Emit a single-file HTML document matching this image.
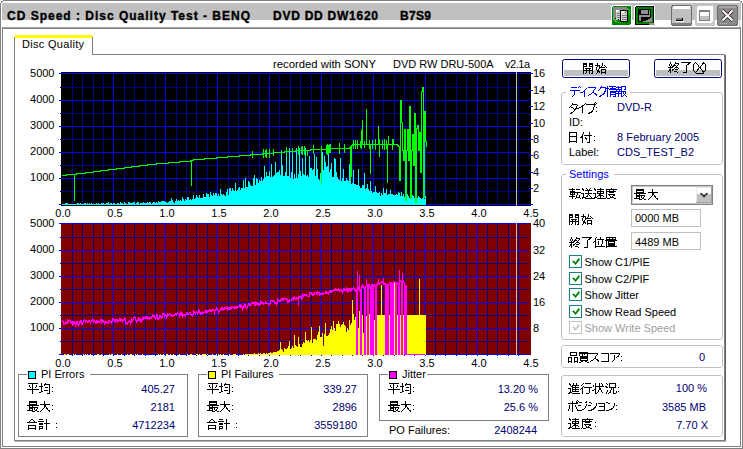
<!DOCTYPE html>
<html><head><meta charset="utf-8"><style>
html,body{margin:0;padding:0;background:#fff;overflow:hidden}
svg{display:block}
text{font-family:"Liberation Sans",sans-serif}
</style></head><body>
<svg width="743" height="449" viewBox="0 0 743 449" shape-rendering="crispEdges">
<rect x="0" y="0" width="743" height="449" fill="#fff"/>
<rect x="3" y="0" width="737" height="1" fill="#808080"/>
<rect x="0" y="3" width="1" height="446" fill="#808080"/>
<rect x="742" y="3" width="1" height="446" fill="#808080"/>
<rect x="0" y="448" width="743" height="1" fill="#808080"/>
<rect x="1" y="1" width="1" height="1" fill="#808080"/>
<rect x="2" y="1" width="1" height="1" fill="#808080"/>
<rect x="1" y="2" width="1" height="1" fill="#808080"/>
<rect x="740" y="1" width="1" height="1" fill="#808080"/>
<rect x="741" y="1" width="1" height="1" fill="#808080"/>
<rect x="741" y="2" width="1" height="1" fill="#808080"/>
<rect x="2" y="3" width="739" height="17" fill="#c0c0c0"/>
<rect x="2" y="27" width="739" height="1" fill="#a8a8a8"/>
<rect x="2" y="28" width="739" height="1" fill="#808080"/>
<rect x="2" y="27" width="1" height="420" fill="#808080"/>
<rect x="740" y="27" width="1" height="420" fill="#808080"/>
<rect x="2" y="446" width="739" height="1" fill="#808080"/>
<text x="7" y="20" fill="#000" font-size="12" text-anchor="start" font-weight="bold" textLength="243" lengthAdjust="spacing" stroke="#000" stroke-width="0.35">CD Speed : Disc Quality Test - BENQ</text>
<text x="273" y="20" fill="#000" font-size="12" text-anchor="start" font-weight="bold" textLength="105" lengthAdjust="spacing" stroke="#000" stroke-width="0.35">DVD DD DW1620</text>
<text x="400" y="20" fill="#000" font-size="12" text-anchor="start" font-weight="bold" textLength="31" lengthAdjust="spacing" stroke="#000" stroke-width="0.35">B7S9</text>
<rect x="611" y="5" width="21" height="21" fill="#fff" rx="3"/>
<rect x="612" y="6" width="19" height="19" fill="#008000" rx="2"/>
<rect x="613" y="7" width="14" height="3" fill="#888888"/>
<rect x="627" y="8" width="1" height="2" fill="#888888"/>
<rect x="628" y="9" width="1" height="1" fill="#888888"/>
<rect x="613" y="7" width="3" height="13" fill="#888888"/>
<rect x="614" y="20" width="2" height="1" fill="#888888"/>
<rect x="615" y="21" width="1" height="1" fill="#888888"/>
<rect x="616" y="10" width="5" height="10" fill="#c8c8c8"/>
<rect x="616" y="10" width="2" height="2" fill="#ffffff"/>
<rect x="617" y="13" width="3" height="1" fill="#808080"/>
<rect x="617" y="15" width="3" height="1" fill="#808080"/>
<rect x="617" y="17" width="3" height="1" fill="#808080"/>
<rect x="615" y="18" width="1" height="1" fill="#000"/>
<rect x="618" y="19" width="1" height="1" fill="#000"/>
<rect x="620" y="10" width="8" height="12" fill="#000"/>
<rect x="621" y="11" width="6" height="10" fill="#d0d0d0"/>
<rect x="621" y="11" width="3" height="2" fill="#f0f0f0"/>
<rect x="626" y="11" width="1" height="1" fill="#000"/>
<rect x="625" y="12" width="1" height="1" fill="#606060"/>
<rect x="622" y="15" width="5" height="1" fill="#808080"/>
<rect x="622" y="17" width="5" height="1" fill="#808080"/>
<rect x="622" y="19" width="5" height="1" fill="#808080"/>
<rect x="628" y="9" width="1" height="1" fill="#00ff00"/>
<rect x="629" y="10" width="1" height="1" fill="#00ff00"/>
<rect x="626" y="11" width="1" height="1" fill="#00ff00"/>
<rect x="629" y="12" width="1" height="1" fill="#00ff00"/>
<rect x="629" y="14" width="1" height="1" fill="#00ff00"/>
<rect x="613" y="12" width="1" height="1" fill="#00ff00"/>
<rect x="613" y="17" width="1" height="1" fill="#00ff00"/>
<rect x="614" y="19" width="1" height="1" fill="#00ff00"/>
<rect x="616" y="21" width="1" height="1" fill="#00ff00"/>
<rect x="618" y="22" width="1" height="1" fill="#00ff00"/>
<rect x="620" y="22" width="1" height="1" fill="#00ff00"/>
<rect x="634" y="5" width="21" height="21" fill="#fff" rx="3"/>
<rect x="635" y="6" width="19" height="19" fill="#000" rx="2"/>
<rect x="636" y="7" width="17" height="17" fill="#008000" rx="1"/>
<rect x="638" y="9" width="13" height="13" fill="#000"/>
<rect x="641" y="10" width="7" height="4" fill="#909090"/>
<rect x="639" y="15" width="11" height="2" fill="#909090"/>
<rect x="639" y="15" width="2" height="6" fill="#909090"/>
<rect x="649" y="11" width="1" height="6" fill="#909090"/>
<rect x="649" y="10" width="1" height="1" fill="#00ff00"/>
<path d="M642 22 L652 22 L652 17 L649 19 L647 20 Z" fill="#909090"/>
<rect x="649" y="23" width="5" height="2" fill="#909090"/>
<rect x="654" y="25" width="1" height="1" fill="#a0a0a0"/>
<rect x="671" y="5" width="21" height="21" fill="#707070" rx="3"/>
<rect x="672" y="6" width="19" height="19" fill="#c0c0c0" rx="2"/>
<rect x="673" y="6" width="17" height="3" fill="#ffffff"/>
<rect x="672" y="23" width="19" height="2" fill="#808080"/>
<rect x="676" y="18" width="7" height="3" fill="#000"/>
<rect x="676" y="18" width="6" height="2" fill="#808080"/>
<rect x="676" y="21" width="8" height="1" fill="#fff"/>
<rect x="695" y="5" width="20" height="21" fill="#c8c8c8" rx="3"/>
<rect x="697" y="6" width="16" height="17" fill="#fff" rx="2"/>
<rect x="699" y="10" width="11" height="11" fill="#808080"/>
<rect x="700" y="12" width="9" height="8" fill="#fff"/>
<rect x="700" y="16" width="9" height="4" fill="#c0c0c0"/>
<rect x="717" y="5" width="21" height="21" fill="#6c6c6c" rx="3"/>
<rect x="718" y="6" width="19" height="19" fill="#8a8a8a" rx="2"/>
<rect x="719" y="6" width="17" height="2" fill="#a8a8a8"/>
<rect x="720" y="23" width="1" height="1" fill="#b8b8b8"/>
<rect x="722" y="23" width="1" height="1" fill="#b8b8b8"/>
<rect x="724" y="23" width="1" height="1" fill="#b8b8b8"/>
<rect x="726" y="23" width="1" height="1" fill="#b8b8b8"/>
<path d="M722.5 10.5 L732.5 20.5 M732.5 10.5 L722.5 20.5" stroke="#000" stroke-width="3.2" shape-rendering="auto"/>
<path d="M722.5 10.5 L732.5 20.5 M732.5 10.5 L722.5 20.5" stroke="#fff" stroke-width="2.2" shape-rendering="auto"/>
<rect x="726" y="12" width="1" height="1" fill="#c00000"/>
<rect x="728" y="13" width="1" height="1" fill="#c00000"/>
<rect x="739" y="3" width="1" height="24" fill="#c8c8c8"/>
<rect x="14" y="37" width="1" height="404" fill="#808080"/>
<rect x="15" y="35" width="77" height="1" fill="#ffff00"/>
<rect x="15" y="36" width="78" height="1" fill="#ffff00"/>
<rect x="15" y="37" width="78" height="1" fill="#ffff00"/>
<rect x="92" y="37" width="1" height="18" fill="#808080"/>
<text x="22" y="48" fill="#000" font-size="11" text-anchor="start" font-weight="normal" textLength="62" lengthAdjust="spacing">Disc Quality</text>
<rect x="92" y="54" width="633" height="1" fill="#808080"/>
<rect x="724" y="54" width="1" height="388" fill="#808080"/>
<rect x="725" y="55" width="1" height="387" fill="#606060"/>
<rect x="14" y="440" width="712" height="1" fill="#808080"/>
<rect x="15" y="441" width="711" height="1" fill="#b0b0b0"/>
<rect x="61" y="72" width="470" height="134" fill="#000"/>
<rect x="72" y="73" width="1" height="133" fill="#000080"/>
<rect x="82" y="73" width="1" height="133" fill="#000080"/>
<rect x="93" y="73" width="1" height="133" fill="#000080"/>
<rect x="103" y="73" width="1" height="133" fill="#000080"/>
<rect x="124" y="73" width="1" height="133" fill="#000080"/>
<rect x="134" y="73" width="1" height="133" fill="#000080"/>
<rect x="145" y="73" width="1" height="133" fill="#000080"/>
<rect x="155" y="73" width="1" height="133" fill="#000080"/>
<rect x="176" y="73" width="1" height="133" fill="#000080"/>
<rect x="186" y="73" width="1" height="133" fill="#000080"/>
<rect x="196" y="73" width="1" height="133" fill="#000080"/>
<rect x="207" y="73" width="1" height="133" fill="#000080"/>
<rect x="228" y="73" width="1" height="133" fill="#000080"/>
<rect x="238" y="73" width="1" height="133" fill="#000080"/>
<rect x="248" y="73" width="1" height="133" fill="#000080"/>
<rect x="259" y="73" width="1" height="133" fill="#000080"/>
<rect x="279" y="73" width="1" height="133" fill="#000080"/>
<rect x="290" y="73" width="1" height="133" fill="#000080"/>
<rect x="300" y="73" width="1" height="133" fill="#000080"/>
<rect x="311" y="73" width="1" height="133" fill="#000080"/>
<rect x="331" y="73" width="1" height="133" fill="#000080"/>
<rect x="342" y="73" width="1" height="133" fill="#000080"/>
<rect x="352" y="73" width="1" height="133" fill="#000080"/>
<rect x="362" y="73" width="1" height="133" fill="#000080"/>
<rect x="383" y="73" width="1" height="133" fill="#000080"/>
<rect x="394" y="73" width="1" height="133" fill="#000080"/>
<rect x="404" y="73" width="1" height="133" fill="#000080"/>
<rect x="414" y="73" width="1" height="133" fill="#000080"/>
<rect x="435" y="73" width="1" height="133" fill="#000080"/>
<rect x="445" y="73" width="1" height="133" fill="#000080"/>
<rect x="456" y="73" width="1" height="133" fill="#000080"/>
<rect x="466" y="73" width="1" height="133" fill="#000080"/>
<rect x="487" y="73" width="1" height="133" fill="#000080"/>
<rect x="497" y="73" width="1" height="133" fill="#000080"/>
<rect x="508" y="73" width="1" height="133" fill="#000080"/>
<rect x="518" y="73" width="1" height="133" fill="#000080"/>
<rect x="60" y="191" width="469" height="1" fill="#000080"/>
<rect x="60" y="165" width="469" height="1" fill="#000080"/>
<rect x="60" y="139" width="469" height="1" fill="#000080"/>
<rect x="60" y="113" width="469" height="1" fill="#000080"/>
<rect x="60" y="87" width="469" height="1" fill="#000080"/>
<rect x="113" y="73" width="1" height="133" fill="#0000ff"/>
<rect x="165" y="73" width="1" height="133" fill="#0000ff"/>
<rect x="217" y="73" width="1" height="133" fill="#0000ff"/>
<rect x="269" y="73" width="1" height="133" fill="#0000ff"/>
<rect x="321" y="73" width="1" height="133" fill="#0000ff"/>
<rect x="373" y="73" width="1" height="133" fill="#0000ff"/>
<rect x="425" y="73" width="1" height="133" fill="#0000ff"/>
<rect x="477" y="73" width="1" height="133" fill="#0000ff"/>
<rect x="59" y="204" width="470" height="1" fill="#0000ff"/>
<rect x="59" y="178" width="470" height="1" fill="#0000ff"/>
<rect x="59" y="152" width="470" height="1" fill="#0000ff"/>
<rect x="59" y="126" width="470" height="1" fill="#0000ff"/>
<rect x="59" y="100" width="470" height="1" fill="#0000ff"/>
<rect x="59" y="73" width="470" height="1" fill="#0000ff"/>
<path fill="#00ffff" d="M62 204h1V205h-1zM63 204h1V205h-1zM64 204h1V205h-1zM65 203h1V205h-1zM66 203h1V205h-1zM67 203h1V205h-1zM68 204h1V205h-1zM69 204h1V205h-1zM70 204h1V205h-1zM71 204h1V205h-1zM72 204h1V205h-1zM73 204h1V205h-1zM74 204h1V205h-1zM75 204h1V205h-1zM76 204h1V205h-1zM77 203h1V205h-1zM78 203h1V205h-1zM79 204h1V205h-1zM80 203h1V205h-1zM81 204h1V205h-1zM82 204h1V205h-1zM83 204h1V205h-1zM84 203h1V205h-1zM85 203h1V205h-1zM86 204h1V205h-1zM87 203h1V205h-1zM88 204h1V205h-1zM89 203h1V205h-1zM90 204h1V205h-1zM91 203h1V205h-1zM92 204h1V205h-1zM93 204h1V205h-1zM94 204h1V205h-1zM95 204h1V205h-1zM96 203h1V205h-1zM97 204h1V205h-1zM98 203h1V205h-1zM99 204h1V205h-1zM100 204h1V205h-1zM101 203h1V205h-1zM102 203h1V205h-1zM103 203h1V205h-1zM104 204h1V205h-1zM105 204h1V205h-1zM106 203h1V205h-1zM107 203h1V205h-1zM108 202h1V205h-1zM109 204h1V205h-1zM110 203h1V205h-1zM111 203h1V205h-1zM112 204h1V205h-1zM113 203h1V205h-1zM114 203h1V205h-1zM115 204h1V205h-1zM116 204h1V205h-1zM117 203h1V205h-1zM118 203h1V205h-1zM119 204h1V205h-1zM120 202h1V205h-1zM121 203h1V205h-1zM122 203h1V205h-1zM123 204h1V205h-1zM124 202h1V205h-1zM125 203h1V205h-1zM126 204h1V205h-1zM127 204h1V205h-1zM128 202h1V205h-1zM129 202h1V205h-1zM130 203h1V205h-1zM131 203h1V205h-1zM132 203h1V205h-1zM133 202h1V205h-1zM134 202h1V205h-1zM135 204h1V205h-1zM136 203h1V205h-1zM137 202h1V205h-1zM138 202h1V205h-1zM139 204h1V205h-1zM140 203h1V205h-1zM141 203h1V205h-1zM142 203h1V205h-1zM143 202h1V205h-1zM144 203h1V205h-1zM145 203h1V205h-1zM146 203h1V205h-1zM147 202h1V205h-1zM148 203h1V205h-1zM149 202h1V205h-1zM150 202h1V205h-1zM151 204h1V205h-1zM152 203h1V205h-1zM153 202h1V205h-1zM154 202h1V205h-1zM155 203h1V205h-1zM156 202h1V205h-1zM157 203h1V205h-1zM158 201h1V205h-1zM159 202h1V205h-1zM160 202h1V205h-1zM161 201h1V205h-1zM162 201h1V205h-1zM163 201h1V205h-1zM164 201h1V205h-1zM165 202h1V205h-1zM166 202h1V205h-1zM167 203h1V205h-1zM168 202h1V205h-1zM169 201h1V205h-1zM170 201h1V205h-1zM171 198h1V205h-1zM172 200h1V205h-1zM173 202h1V205h-1zM174 203h1V205h-1zM175 201h1V205h-1zM176 199h1V205h-1zM177 201h1V205h-1zM178 200h1V205h-1zM179 201h1V205h-1zM180 200h1V205h-1zM181 201h1V205h-1zM182 197h1V205h-1zM183 199h1V205h-1zM184 201h1V205h-1zM185 199h1V205h-1zM186 200h1V205h-1zM187 197h1V205h-1zM188 197h1V205h-1zM189 200h1V205h-1zM190 199h1V205h-1zM191 200h1V205h-1zM192 199h1V205h-1zM193 195h1V205h-1zM194 199h1V205h-1zM195 198h1V205h-1zM196 195h1V205h-1zM197 197h1V205h-1zM198 198h1V205h-1zM199 195h1V205h-1zM200 198h1V205h-1zM201 198h1V205h-1zM202 198h1V205h-1zM203 194h1V205h-1zM204 197h1V205h-1zM205 197h1V205h-1zM206 193h1V205h-1zM207 194h1V205h-1zM208 194h1V205h-1zM209 197h1V205h-1zM210 192h1V205h-1zM211 195h1V205h-1zM212 196h1V205h-1zM213 193h1V205h-1zM214 195h1V205h-1zM215 193h1V205h-1zM216 193h1V205h-1zM217 196h1V205h-1zM218 194h1V205h-1zM219 196h1V205h-1zM220 189h1V205h-1zM221 194h1V205h-1zM222 195h1V205h-1zM223 194h1V205h-1zM224 195h1V205h-1zM225 196h1V205h-1zM226 192h1V205h-1zM227 189h1V205h-1zM228 195h1V205h-1zM229 188h1V205h-1zM230 188h1V205h-1zM231 191h1V205h-1zM232 188h1V205h-1zM233 190h1V205h-1zM234 191h1V205h-1zM235 183h1V205h-1zM236 191h1V205h-1zM237 190h1V205h-1zM238 188h1V205h-1zM239 187h1V205h-1zM240 190h1V205h-1zM241 188h1V205h-1zM242 188h1V205h-1zM243 180h1V205h-1zM244 188h1V205h-1zM245 178h1V205h-1zM246 187h1V205h-1zM247 187h1V205h-1zM248 181h1V205h-1zM249 182h1V205h-1zM250 185h1V205h-1zM251 186h1V205h-1zM252 186h1V205h-1zM253 178h1V205h-1zM254 175h1V205h-1zM255 185h1V205h-1zM256 178h1V205h-1zM257 179h1V205h-1zM258 183h1V205h-1zM259 180h1V205h-1zM260 181h1V205h-1zM261 177h1V205h-1zM262 181h1V205h-1zM263 179h1V205h-1zM264 166h1V205h-1zM265 177h1V205h-1zM266 172h1V205h-1zM267 176h1V205h-1zM268 176h1V205h-1zM269 171h1V205h-1zM270 177h1V205h-1zM271 164h1V205h-1zM272 177h1V205h-1zM273 176h1V205h-1zM274 175h1V205h-1zM275 162h1V205h-1zM276 173h1V205h-1zM277 172h1V205h-1zM278 172h1V205h-1zM279 170h1V205h-1zM280 175h1V205h-1zM281 150h1V205h-1zM282 165h1V205h-1zM283 176h1V205h-1zM284 176h1V205h-1zM285 172h1V205h-1zM286 156h1V205h-1zM287 176h1V205h-1zM288 176h1V205h-1zM289 148h1V205h-1zM290 178h1V205h-1zM291 172h1V205h-1zM292 153h1V205h-1zM293 179h1V205h-1zM294 174h1V205h-1zM295 178h1V205h-1zM296 148h1V205h-1zM297 178h1V205h-1zM298 174h1V205h-1zM299 148h1V205h-1zM300 171h1V205h-1zM301 176h1V205h-1zM302 158h1V205h-1zM303 174h1V205h-1zM304 175h1V205h-1zM305 148h1V205h-1zM306 176h1V205h-1zM307 175h1V205h-1zM308 177h1V205h-1zM309 156h1V205h-1zM310 168h1V205h-1zM311 168h1V205h-1zM312 170h1V205h-1zM313 169h1V205h-1zM314 154h1V205h-1zM315 176h1V205h-1zM316 157h1V205h-1zM317 169h1V205h-1zM318 179h1V205h-1zM319 180h1V205h-1zM320 173h1V205h-1zM321 173h1V205h-1zM322 152h1V205h-1zM323 170h1V205h-1zM324 156h1V205h-1zM325 162h1V205h-1zM326 167h1V205h-1zM327 166h1V205h-1zM328 150h1V205h-1zM329 172h1V205h-1zM330 169h1V205h-1zM331 163h1V205h-1zM332 177h1V205h-1zM333 177h1V205h-1zM334 158h1V205h-1zM335 159h1V205h-1zM336 172h1V205h-1zM337 177h1V205h-1zM338 179h1V205h-1zM339 180h1V205h-1zM340 158h1V205h-1zM341 181h1V205h-1zM342 178h1V205h-1zM343 169h1V205h-1zM344 181h1V205h-1zM345 181h1V205h-1zM346 178h1V205h-1zM347 180h1V205h-1zM348 181h1V205h-1zM349 164h1V205h-1zM350 180h1V205h-1zM351 184h1V205h-1zM352 183h1V205h-1zM353 170h1V205h-1zM354 184h1V205h-1zM355 184h1V205h-1zM356 185h1V205h-1zM357 185h1V205h-1zM358 169h1V205h-1zM359 186h1V205h-1zM360 188h1V205h-1zM361 188h1V205h-1zM362 185h1V205h-1zM363 185h1V205h-1zM364 173h1V205h-1zM365 189h1V205h-1zM366 188h1V205h-1zM367 184h1V205h-1zM368 189h1V205h-1zM369 191h1V205h-1zM370 181h1V205h-1zM371 191h1V205h-1zM372 193h1V205h-1zM373 192h1V205h-1zM374 192h1V205h-1zM375 186h1V205h-1zM376 192h1V205h-1zM377 193h1V205h-1zM378 193h1V205h-1zM379 192h1V205h-1zM380 196h1V205h-1zM381 193h1V205h-1zM382 195h1V205h-1zM383 188h1V205h-1zM384 193h1V205h-1zM385 193h1V205h-1zM386 189h1V205h-1zM387 195h1V205h-1zM388 194h1V205h-1zM389 194h1V205h-1zM390 190h1V205h-1zM391 194h1V205h-1zM392 194h1V205h-1zM393 195h1V205h-1zM394 195h1V205h-1zM395 195h1V205h-1zM396 194h1V205h-1zM397 195h1V205h-1zM398 192h1V205h-1zM399 193h1V205h-1zM400 196h1V205h-1zM401 192h1V205h-1zM402 196h1V205h-1zM403 194h1V205h-1zM404 197h1V205h-1zM405 194h1V205h-1zM406 195h1V205h-1zM407 194h1V205h-1zM408 196h1V205h-1zM409 198h1V205h-1zM410 197h1V205h-1zM411 197h1V205h-1zM412 195h1V205h-1zM413 196h1V205h-1zM414 198h1V205h-1zM415 198h1V205h-1zM416 198h1V205h-1zM417 198h1V205h-1zM418 196h1V205h-1zM419 197h1V205h-1zM420 198h1V205h-1zM421 199h1V205h-1zM422 198h1V205h-1zM423 198h1V205h-1zM424 199h1V205h-1zM425 196h1V205h-1z"/>
<path fill="#00ff00" d="M62 175h1V176h-1zM63 175h1V176h-1zM64 175h1V176h-1zM65 175h1V176h-1zM66 174h1V176h-1zM67 174h1V175h-1zM68 174h1V175h-1zM69 174h1V175h-1zM70 174h1V175h-1zM71 174h1V175h-1zM72 174h1V175h-1zM73 174h1V175h-1zM74 174h1V175h-1zM75 174h1V175h-1zM76 173h1V175h-1zM77 173h1V174h-1zM78 173h1V174h-1zM79 173h1V174h-1zM80 173h1V174h-1zM81 173h1V174h-1zM82 173h1V174h-1zM83 173h1V174h-1zM84 173h1V174h-1zM85 172h1V174h-1zM86 172h1V173h-1zM87 172h1V173h-1zM88 172h1V173h-1zM89 172h1V173h-1zM90 172h1V173h-1zM91 172h1V173h-1zM92 172h1V173h-1zM93 171h1V173h-1zM94 171h1V172h-1zM95 171h1V172h-1zM96 171h1V172h-1zM97 171h1V172h-1zM98 171h1V172h-1zM99 171h1V172h-1zM100 170h1V172h-1zM101 170h1V171h-1zM102 170h1V171h-1zM103 170h1V171h-1zM104 170h1V171h-1zM105 170h1V171h-1zM106 170h1V171h-1zM107 170h1V171h-1zM108 169h1V171h-1zM109 169h1V170h-1zM110 169h1V170h-1zM111 169h1V170h-1zM112 169h1V170h-1zM113 169h1V170h-1zM114 169h1V170h-1zM115 169h1V170h-1zM116 168h1V170h-1zM117 168h1V169h-1zM118 168h1V169h-1zM119 168h1V169h-1zM120 168h1V169h-1zM121 168h1V169h-1zM122 168h1V169h-1zM123 168h1V169h-1zM124 167h1V169h-1zM125 167h1V168h-1zM126 167h1V168h-1zM127 167h1V168h-1zM128 167h1V168h-1zM129 167h1V168h-1zM130 167h1V168h-1zM131 166h1V168h-1zM132 166h1V167h-1zM133 166h1V167h-1zM134 166h1V167h-1zM135 166h1V167h-1zM136 166h1V167h-1zM137 166h1V167h-1zM138 166h1V167h-1zM139 165h1V167h-1zM140 165h1V166h-1zM141 165h1V166h-1zM142 165h1V166h-1zM143 165h1V166h-1zM144 165h1V166h-1zM145 165h1V166h-1zM146 165h1V166h-1zM147 164h1V166h-1zM148 164h1V165h-1zM149 164h1V165h-1zM150 164h1V165h-1zM151 164h1V165h-1zM152 164h1V165h-1zM153 164h1V165h-1zM154 164h1V165h-1zM155 164h1V165h-1zM156 163h1V165h-1zM157 163h1V164h-1zM158 163h1V164h-1zM159 163h1V164h-1zM160 163h1V164h-1zM161 163h1V164h-1zM162 163h1V164h-1zM163 163h1V164h-1zM164 163h1V164h-1zM165 163h1V164h-1zM166 163h1V164h-1zM167 163h1V164h-1zM168 162h1V164h-1zM169 162h1V163h-1zM170 162h1V163h-1zM171 162h1V163h-1zM172 162h1V163h-1zM173 162h1V163h-1zM174 162h1V163h-1zM175 162h1V163h-1zM176 162h1V163h-1zM177 162h1V163h-1zM178 162h1V163h-1zM179 161h1V163h-1zM180 161h1V162h-1zM181 161h1V162h-1zM182 161h1V162h-1zM183 161h1V162h-1zM184 161h1V162h-1zM185 161h1V162h-1zM186 161h1V162h-1zM187 161h1V162h-1zM188 161h1V162h-1zM189 161h1V162h-1zM190 160h1V162h-1zM191 160h1V161h-1zM192 160h1V161h-1zM193 159h1V161h-1zM194 159h1V160h-1zM195 159h1V160h-1zM196 159h1V160h-1zM197 159h1V160h-1zM198 159h1V160h-1zM199 159h1V160h-1zM200 159h1V160h-1zM201 159h1V160h-1zM202 159h1V160h-1zM203 159h1V160h-1zM204 158h1V160h-1zM205 158h1V159h-1zM206 158h1V159h-1zM207 158h1V159h-1zM208 158h1V159h-1zM209 158h1V159h-1zM210 158h1V159h-1zM211 158h1V159h-1zM212 158h1V159h-1zM213 158h1V159h-1zM214 158h1V159h-1zM215 158h1V159h-1zM216 157h1V159h-1zM217 157h1V158h-1zM218 157h1V158h-1zM219 157h1V158h-1zM220 157h1V158h-1zM221 157h1V158h-1zM222 157h1V158h-1zM223 157h1V158h-1zM224 157h1V158h-1zM225 157h1V158h-1zM226 157h1V158h-1zM227 156h1V158h-1zM228 156h1V157h-1zM229 156h1V157h-1zM230 156h1V157h-1zM231 156h1V157h-1zM232 156h1V157h-1zM233 156h1V157h-1zM234 156h1V157h-1zM235 156h1V157h-1zM236 156h1V157h-1zM237 156h1V157h-1zM238 156h1V157h-1zM239 155h1V157h-1zM240 155h1V156h-1zM241 155h1V156h-1zM242 155h1V156h-1zM243 155h1V156h-1zM244 155h1V156h-1zM245 155h1V156h-1zM246 155h1V156h-1zM247 155h1V156h-1zM248 155h1V156h-1zM249 155h1V156h-1zM250 154h1V156h-1zM251 154h1V155h-1zM252 154h1V155h-1zM253 154h1V155h-1zM254 154h1V155h-1zM255 154h1V155h-1zM256 154h1V155h-1zM257 154h1V155h-1zM258 154h1V155h-1zM259 154h1V155h-1zM260 154h1V155h-1zM261 154h1V155h-1zM262 153h1V155h-1zM263 153h1V154h-1zM264 153h1V154h-1zM265 153h1V154h-1zM266 153h1V154h-1zM267 153h1V154h-1zM268 153h1V154h-1zM269 153h1V154h-1zM270 153h1V154h-1zM271 153h1V154h-1zM272 153h1V154h-1zM273 152h1V154h-1zM274 152h1V153h-1zM275 152h1V153h-1zM276 152h1V153h-1zM277 152h1V153h-1zM278 152h1V153h-1zM279 152h1V153h-1zM280 152h1V153h-1zM281 152h1V153h-1zM282 152h1V153h-1zM283 152h1V153h-1zM284 151h1V153h-1zM285 151h1V152h-1zM286 151h1V152h-1zM287 151h1V152h-1zM288 151h1V152h-1zM289 151h1V152h-1zM290 151h1V152h-1zM291 151h1V152h-1zM292 151h1V152h-1zM293 151h1V152h-1zM294 151h1V152h-1zM295 150h1V152h-1zM296 150h1V151h-1zM297 150h1V151h-1zM298 150h1V151h-1zM299 150h1V151h-1zM300 150h1V151h-1zM301 150h1V151h-1zM302 150h1V151h-1zM303 150h1V151h-1zM304 150h1V151h-1zM305 150h1V151h-1zM306 150h1V151h-1zM307 150h1V151h-1zM308 150h1V151h-1zM309 150h1V151h-1zM310 149h1V151h-1zM311 149h1V150h-1zM312 149h1V150h-1zM313 149h1V150h-1zM314 149h1V150h-1zM315 149h1V150h-1zM316 149h1V150h-1zM317 149h1V150h-1zM318 149h1V150h-1zM319 149h1V150h-1zM320 149h1V150h-1zM321 149h1V150h-1zM322 149h1V150h-1zM323 149h1V150h-1zM324 149h1V150h-1zM325 149h1V150h-1zM326 149h1V150h-1zM327 149h1V150h-1zM328 149h1V150h-1zM329 148h1V150h-1zM330 148h1V149h-1zM331 148h1V149h-1zM332 148h1V149h-1zM333 148h1V149h-1zM334 148h1V149h-1zM335 148h1V149h-1zM336 148h1V149h-1zM337 148h1V149h-1zM338 148h1V149h-1zM339 148h1V149h-1zM340 148h1V149h-1zM341 148h1V149h-1zM342 148h1V149h-1zM343 148h1V149h-1zM344 148h1V149h-1zM345 148h1V149h-1zM346 148h1V149h-1zM347 148h1V149h-1zM348 148h1V149h-1zM349 147h1V149h-1zM350 146h1V148h-1zM351 145h1V147h-1zM352 144h1V146h-1zM353 144h1V145h-1zM354 144h1V145h-1zM355 144h1V145h-1zM356 144h1V145h-1zM357 144h1V145h-1zM358 144h1V145h-1zM359 144h1V145h-1zM360 144h1V145h-1zM361 144h1V145h-1zM362 144h1V145h-1zM363 144h1V145h-1zM364 144h1V145h-1zM365 144h1V145h-1zM366 144h1V145h-1zM367 144h1V145h-1zM368 144h1V145h-1zM369 144h1V145h-1zM370 144h1V145h-1zM371 144h1V145h-1zM372 144h1V145h-1zM373 144h1V145h-1zM374 144h1V145h-1zM375 144h1V145h-1zM376 144h1V145h-1zM377 144h1V145h-1zM378 144h1V145h-1zM379 144h1V145h-1zM380 144h1V145h-1zM381 144h1V145h-1zM382 144h1V145h-1zM383 144h1V145h-1zM384 144h1V145h-1zM385 144h1V145h-1zM386 144h1V145h-1zM387 144h1V145h-1zM388 144h1V145h-1zM389 144h1V145h-1zM390 144h1V145h-1zM391 144h1V145h-1zM392 144h1V145h-1zM393 144h1V145h-1zM394 144h1V145h-1zM395 144h1V145h-1zM396 144h1V145h-1zM397 144h1V146h-1zM398 145h1V147h-1zM399 146h1V181h-1zM400 100h1V181h-1zM401 100h1V123h-1zM402 122h1V151h-1zM403 150h1V161h-1zM404 129h1V161h-1zM405 129h1V201h-1zM406 150h1V201h-1zM407 129h1V151h-1zM408 129h1V161h-1zM409 106h1V161h-1zM410 106h1V199h-1zM411 150h1V199h-1zM412 134h1V151h-1zM413 134h1V166h-1zM414 113h1V166h-1zM415 113h1V203h-1zM416 128h1V203h-1zM417 125h1V129h-1zM418 125h1V151h-1zM419 132h1V151h-1zM420 132h1V173h-1zM421 91h1V173h-1zM422 87h1V92h-1zM423 87h1V198h-1zM424 111h1V198h-1zM425 111h1V142h-1zM426 141h1V147h-1z"/>
<path fill="#00ff00" d="M74 174h1V201h-1zM191 160h1V186h-1zM321 149h1V184h-1zM307 150h1V156h-1zM350 146h1V181h-1zM351 145h1V177h-1zM370 144h1V174h-1zM379 144h1V157h-1zM387 144h1V183h-1zM362 120h1V145h-1zM366 109h1V145h-1zM378 126h1V145h-1zM388 136h1V145h-1zM393 139h1V145h-1zM361 130h1V145h-1zM252 151h1V158h-1zM263 149h1V158h-1zM265 150h1V157h-1zM266 149h1V158h-1zM269 149h1V158h-1zM273 149h1V156h-1zM286 147h1V156h-1zM292 148h1V155h-1zM298 146h1V155h-1zM301 147h1V154h-1zM302 146h1V155h-1zM304 146h1V155h-1zM313 145h1V154h-1zM321 146h1V153h-1zM326 145h1V154h-1zM327 144h1V155h-1zM328 145h1V154h-1zM329 144h1V153h-1zM330 144h1V153h-1zM339 143h1V154h-1zM344 144h1V153h-1zM353 140h1V149h-1zM355 140h1V149h-1zM357 140h1V149h-1zM360 141h1V148h-1zM361 140h1V149h-1zM364 141h1V148h-1zM369 140h1V149h-1zM372 140h1V149h-1zM375 139h1V150h-1zM379 139h1V150h-1zM382 140h1V149h-1zM384 139h1V150h-1zM386 140h1V149h-1zM392 139h1V150h-1z"/>
<rect x="529" y="204" width="4" height="1" fill="#0000ff"/>
<rect x="529" y="196" width="2" height="1" fill="#0000ff"/>
<rect x="529" y="188" width="4" height="1" fill="#0000ff"/>
<rect x="529" y="180" width="2" height="1" fill="#0000ff"/>
<rect x="529" y="172" width="4" height="1" fill="#0000ff"/>
<rect x="529" y="164" width="2" height="1" fill="#0000ff"/>
<rect x="529" y="155" width="4" height="1" fill="#0000ff"/>
<rect x="529" y="147" width="2" height="1" fill="#0000ff"/>
<rect x="529" y="139" width="4" height="1" fill="#0000ff"/>
<rect x="529" y="131" width="2" height="1" fill="#0000ff"/>
<rect x="529" y="123" width="4" height="1" fill="#0000ff"/>
<rect x="529" y="114" width="2" height="1" fill="#0000ff"/>
<rect x="529" y="106" width="4" height="1" fill="#0000ff"/>
<rect x="529" y="98" width="2" height="1" fill="#0000ff"/>
<rect x="529" y="90" width="4" height="1" fill="#0000ff"/>
<rect x="529" y="82" width="2" height="1" fill="#0000ff"/>
<rect x="529" y="73" width="4" height="1" fill="#0000ff"/>
<rect x="516" y="72" width="1" height="134" fill="#c0c0c0"/>
<text x="54.5" y="77" fill="#000" font-size="11" text-anchor="end" font-weight="normal">5000</text>
<text x="54.5" y="103" fill="#000" font-size="11" text-anchor="end" font-weight="normal">4000</text>
<text x="54.5" y="129" fill="#000" font-size="11" text-anchor="end" font-weight="normal">3000</text>
<text x="54.5" y="155" fill="#000" font-size="11" text-anchor="end" font-weight="normal">2000</text>
<text x="54.5" y="181" fill="#000" font-size="11" text-anchor="end" font-weight="normal">1000</text>
<text x="533" y="77" fill="#000" font-size="11" text-anchor="start" font-weight="normal">16</text>
<text x="533" y="94" fill="#000" font-size="11" text-anchor="start" font-weight="normal">14</text>
<text x="533" y="110" fill="#000" font-size="11" text-anchor="start" font-weight="normal">12</text>
<text x="533" y="127" fill="#000" font-size="11" text-anchor="start" font-weight="normal">10</text>
<text x="533" y="143" fill="#000" font-size="11" text-anchor="start" font-weight="normal">8</text>
<text x="533" y="159" fill="#000" font-size="11" text-anchor="start" font-weight="normal">6</text>
<text x="533" y="176" fill="#000" font-size="11" text-anchor="start" font-weight="normal">4</text>
<text x="533" y="192" fill="#000" font-size="11" text-anchor="start" font-weight="normal">2</text>
<text x="63" y="217" fill="#000" font-size="11" text-anchor="middle" font-weight="normal">0.0</text>
<text x="115" y="217" fill="#000" font-size="11" text-anchor="middle" font-weight="normal">0.5</text>
<text x="167" y="217" fill="#000" font-size="11" text-anchor="middle" font-weight="normal">1.0</text>
<text x="219" y="217" fill="#000" font-size="11" text-anchor="middle" font-weight="normal">1.5</text>
<text x="271" y="217" fill="#000" font-size="11" text-anchor="middle" font-weight="normal">2.0</text>
<text x="323" y="217" fill="#000" font-size="11" text-anchor="middle" font-weight="normal">2.5</text>
<text x="375" y="217" fill="#000" font-size="11" text-anchor="middle" font-weight="normal">3.0</text>
<text x="427" y="217" fill="#000" font-size="11" text-anchor="middle" font-weight="normal">3.5</text>
<text x="479" y="217" fill="#000" font-size="11" text-anchor="middle" font-weight="normal">4.0</text>
<text x="531" y="217" fill="#000" font-size="11" text-anchor="middle" font-weight="normal">4.5</text>
<rect x="61" y="223" width="470" height="132" fill="#800000"/>
<rect x="72" y="223" width="1" height="133" fill="#000080"/>
<rect x="82" y="223" width="1" height="133" fill="#000080"/>
<rect x="93" y="223" width="1" height="133" fill="#000080"/>
<rect x="103" y="223" width="1" height="133" fill="#000080"/>
<rect x="124" y="223" width="1" height="133" fill="#000080"/>
<rect x="134" y="223" width="1" height="133" fill="#000080"/>
<rect x="145" y="223" width="1" height="133" fill="#000080"/>
<rect x="155" y="223" width="1" height="133" fill="#000080"/>
<rect x="176" y="223" width="1" height="133" fill="#000080"/>
<rect x="186" y="223" width="1" height="133" fill="#000080"/>
<rect x="196" y="223" width="1" height="133" fill="#000080"/>
<rect x="207" y="223" width="1" height="133" fill="#000080"/>
<rect x="228" y="223" width="1" height="133" fill="#000080"/>
<rect x="238" y="223" width="1" height="133" fill="#000080"/>
<rect x="248" y="223" width="1" height="133" fill="#000080"/>
<rect x="259" y="223" width="1" height="133" fill="#000080"/>
<rect x="279" y="223" width="1" height="133" fill="#000080"/>
<rect x="290" y="223" width="1" height="133" fill="#000080"/>
<rect x="300" y="223" width="1" height="133" fill="#000080"/>
<rect x="311" y="223" width="1" height="133" fill="#000080"/>
<rect x="331" y="223" width="1" height="133" fill="#000080"/>
<rect x="342" y="223" width="1" height="133" fill="#000080"/>
<rect x="352" y="223" width="1" height="133" fill="#000080"/>
<rect x="362" y="223" width="1" height="133" fill="#000080"/>
<rect x="383" y="223" width="1" height="133" fill="#000080"/>
<rect x="394" y="223" width="1" height="133" fill="#000080"/>
<rect x="404" y="223" width="1" height="133" fill="#000080"/>
<rect x="414" y="223" width="1" height="133" fill="#000080"/>
<rect x="435" y="223" width="1" height="133" fill="#000080"/>
<rect x="445" y="223" width="1" height="133" fill="#000080"/>
<rect x="456" y="223" width="1" height="133" fill="#000080"/>
<rect x="466" y="223" width="1" height="133" fill="#000080"/>
<rect x="487" y="223" width="1" height="133" fill="#000080"/>
<rect x="497" y="223" width="1" height="133" fill="#000080"/>
<rect x="508" y="223" width="1" height="133" fill="#000080"/>
<rect x="518" y="223" width="1" height="133" fill="#000080"/>
<rect x="60" y="341" width="469" height="1" fill="#000080"/>
<rect x="60" y="315" width="469" height="1" fill="#000080"/>
<rect x="60" y="289" width="469" height="1" fill="#000080"/>
<rect x="60" y="263" width="469" height="1" fill="#000080"/>
<rect x="60" y="237" width="469" height="1" fill="#000080"/>
<rect x="113" y="223" width="1" height="133" fill="#0000ff"/>
<rect x="165" y="223" width="1" height="133" fill="#0000ff"/>
<rect x="217" y="223" width="1" height="133" fill="#0000ff"/>
<rect x="269" y="223" width="1" height="133" fill="#0000ff"/>
<rect x="321" y="223" width="1" height="133" fill="#0000ff"/>
<rect x="373" y="223" width="1" height="133" fill="#0000ff"/>
<rect x="425" y="223" width="1" height="133" fill="#0000ff"/>
<rect x="477" y="223" width="1" height="133" fill="#0000ff"/>
<rect x="59" y="354" width="470" height="1" fill="#0000ff"/>
<rect x="59" y="328" width="470" height="1" fill="#0000ff"/>
<rect x="59" y="302" width="470" height="1" fill="#0000ff"/>
<rect x="59" y="276" width="470" height="1" fill="#0000ff"/>
<rect x="59" y="250" width="470" height="1" fill="#0000ff"/>
<rect x="59" y="223" width="470" height="1" fill="#0000ff"/>
<path fill="#ffff00" d="M64 354h1V355h-1zM65 354h1V355h-1zM67 354h1V355h-1zM68 354h1V355h-1zM73 354h1V355h-1zM75 354h1V355h-1zM83 354h1V355h-1zM85 354h1V355h-1zM87 354h1V355h-1zM90 354h1V355h-1zM97 354h1V355h-1zM98 354h1V355h-1zM101 354h1V355h-1zM109 354h1V355h-1zM111 354h1V355h-1zM112 354h1V355h-1zM117 354h1V355h-1zM121 354h1V355h-1zM127 354h1V355h-1zM130 354h1V355h-1zM131 354h1V355h-1zM135 354h1V355h-1zM137 354h1V355h-1zM142 354h1V355h-1zM158 354h1V355h-1zM160 354h1V355h-1zM163 354h1V355h-1zM166 354h1V355h-1zM167 354h1V355h-1zM170 354h1V355h-1zM173 354h1V355h-1zM179 354h1V355h-1zM187 354h1V355h-1zM190 354h1V355h-1zM191 354h1V355h-1zM196 354h1V355h-1zM197 354h1V355h-1zM199 354h1V355h-1zM202 354h1V355h-1zM203 354h1V355h-1zM204 354h1V355h-1zM205 354h1V355h-1zM207 354h1V355h-1zM212 354h1V355h-1zM216 354h1V355h-1zM218 354h1V355h-1zM220 354h1V355h-1zM223 354h1V355h-1zM229 354h1V355h-1zM233 354h1V355h-1zM234 354h1V355h-1zM235 354h1V355h-1zM243 354h1V355h-1zM245 354h1V355h-1zM246 354h1V355h-1zM247 354h1V355h-1zM248 354h1V355h-1zM249 354h1V355h-1zM250 354h1V355h-1zM251 354h1V355h-1zM252 354h1V355h-1zM253 354h1V355h-1zM254 353h1V355h-1zM255 354h1V355h-1zM256 354h1V355h-1zM257 354h1V355h-1zM258 353h1V355h-1zM259 354h1V355h-1zM260 353h1V355h-1zM261 354h1V355h-1zM262 354h1V355h-1zM263 353h1V355h-1zM264 353h1V355h-1zM265 354h1V355h-1zM266 353h1V355h-1zM267 354h1V355h-1zM268 353h1V355h-1zM269 353h1V355h-1zM270 352h1V355h-1zM271 353h1V355h-1zM272 353h1V355h-1zM273 352h1V355h-1zM274 352h1V355h-1zM275 352h1V355h-1zM276 352h1V355h-1zM277 351h1V355h-1zM278 351h1V355h-1zM279 350h1V355h-1zM280 342h1V355h-1zM281 349h1V355h-1zM282 350h1V355h-1zM283 352h1V355h-1zM284 348h1V355h-1zM285 349h1V355h-1zM286 349h1V355h-1zM287 348h1V355h-1zM288 346h1V355h-1zM289 341h1V355h-1zM290 349h1V355h-1zM291 348h1V355h-1zM292 346h1V355h-1zM293 348h1V355h-1zM294 335h1V355h-1zM295 345h1V355h-1zM296 346h1V355h-1zM297 347h1V355h-1zM298 337h1V355h-1zM299 344h1V355h-1zM300 347h1V355h-1zM301 347h1V355h-1zM302 344h1V355h-1zM303 342h1V355h-1zM304 343h1V355h-1zM305 332h1V355h-1zM306 340h1V355h-1zM307 341h1V355h-1zM308 340h1V355h-1zM309 342h1V355h-1zM310 340h1V355h-1zM311 327h1V355h-1zM312 343h1V355h-1zM313 339h1V355h-1zM314 339h1V355h-1zM315 339h1V355h-1zM316 340h1V355h-1zM317 335h1V355h-1zM318 332h1V355h-1zM319 326h1V355h-1zM320 337h1V355h-1zM321 337h1V355h-1zM322 333h1V355h-1zM323 346h1V355h-1zM324 334h1V355h-1zM325 323h1V355h-1zM326 336h1V355h-1zM327 336h1V355h-1zM328 335h1V355h-1zM329 333h1V355h-1zM330 329h1V355h-1zM331 326h1V355h-1zM332 330h1V355h-1zM333 321h1V355h-1zM334 328h1V355h-1zM335 331h1V355h-1zM336 324h1V355h-1zM337 324h1V355h-1zM338 321h1V355h-1zM339 324h1V355h-1zM340 327h1V355h-1zM341 325h1V355h-1zM342 324h1V355h-1zM343 322h1V355h-1zM344 325h1V355h-1zM345 326h1V355h-1zM346 332h1V355h-1zM347 328h1V355h-1zM348 330h1V355h-1zM349 320h1V355h-1zM350 325h1V355h-1zM351 323h1V355h-1zM352 300h1V355h-1zM353 314h1V355h-1zM354 320h1V355h-1zM355 317h1V355h-1zM356 321h1V355h-1zM357 319h1V355h-1zM358 328h1V355h-1zM359 311h1V355h-1zM360 314h1V355h-1zM361 317h1V355h-1zM362 315h1V355h-1zM363 333h1V355h-1zM364 321h1V355h-1zM365 320h1V355h-1zM366 316h1V355h-1zM367 319h1V355h-1zM368 321h1V355h-1zM369 314h1V355h-1zM370 315h1V355h-1zM371 321h1V355h-1zM372 324h1V355h-1zM373 317h1V355h-1zM374 320h1V355h-1zM375 315h1V355h-1zM376 315h1V355h-1zM377 315h1V355h-1zM378 315h1V355h-1zM379 315h1V355h-1zM380 315h1V355h-1zM381 285h1V355h-1zM382 315h1V355h-1zM383 315h1V355h-1zM384 315h1V355h-1zM385 315h1V355h-1zM386 315h1V355h-1zM387 315h1V355h-1zM388 315h1V355h-1zM389 315h1V355h-1zM390 315h1V355h-1zM391 315h1V355h-1zM392 315h1V355h-1zM393 315h1V355h-1zM394 281h1V355h-1zM395 315h1V355h-1zM396 315h1V355h-1zM397 315h1V355h-1zM398 315h1V355h-1zM399 315h1V355h-1zM400 315h1V355h-1zM401 315h1V355h-1zM402 315h1V355h-1zM403 315h1V355h-1zM404 315h1V355h-1zM405 315h1V355h-1zM406 315h1V355h-1zM407 315h1V355h-1zM408 315h1V355h-1zM409 315h1V355h-1zM410 315h1V355h-1zM411 315h1V355h-1zM412 315h1V355h-1zM413 315h1V355h-1zM414 315h1V355h-1zM415 315h1V355h-1zM416 315h1V355h-1zM417 315h1V355h-1zM418 315h1V355h-1zM419 279h1V355h-1zM420 315h1V355h-1zM421 315h1V355h-1zM422 315h1V355h-1zM423 315h1V355h-1zM424 315h1V355h-1zM425 315h1V355h-1z"/>
<path fill="#ff00ff" d="M62 321h1V322h-1zM63 321h1V324h-1zM64 323h1V324h-1zM65 322h1V324h-1zM66 322h1V324h-1zM67 320h1V324h-1zM68 320h1V321h-1zM69 320h1V321h-1zM70 320h1V322h-1zM71 321h1V322h-1zM72 321h1V325h-1zM73 321h1V325h-1zM74 321h1V323h-1zM75 322h1V325h-1zM76 321h1V325h-1zM77 321h1V325h-1zM78 324h1V325h-1zM79 321h1V325h-1zM80 320h1V322h-1zM81 320h1V325h-1zM82 322h1V325h-1zM83 320h1V323h-1zM84 320h1V321h-1zM85 320h1V322h-1zM86 321h1V322h-1zM87 321h1V322h-1zM88 320h1V322h-1zM89 320h1V322h-1zM90 321h1V322h-1zM91 320h1V322h-1zM92 319h1V321h-1zM93 319h1V322h-1zM94 321h1V322h-1zM95 321h1V324h-1zM96 320h1V324h-1zM97 320h1V323h-1zM98 322h1V323h-1zM99 321h1V323h-1zM100 319h1V322h-1zM101 319h1V322h-1zM102 320h1V322h-1zM103 320h1V322h-1zM104 321h1V324h-1zM105 321h1V324h-1zM106 321h1V323h-1zM107 322h1V324h-1zM108 320h1V324h-1zM109 320h1V322h-1zM110 321h1V323h-1zM111 321h1V323h-1zM112 318h1V322h-1zM113 318h1V321h-1zM114 319h1V321h-1zM115 319h1V321h-1zM116 319h1V321h-1zM117 319h1V322h-1zM118 320h1V322h-1zM119 318h1V321h-1zM120 318h1V321h-1zM121 319h1V321h-1zM122 319h1V321h-1zM123 320h1V321h-1zM124 318h1V321h-1zM125 318h1V323h-1zM126 322h1V323h-1zM127 322h1V323h-1zM128 321h1V323h-1zM129 321h1V322h-1zM130 321h1V323h-1zM131 319h1V323h-1zM132 319h1V320h-1zM133 317h1V320h-1zM134 317h1V318h-1zM135 317h1V321h-1zM136 320h1V322h-1zM137 320h1V322h-1zM138 318h1V321h-1zM139 318h1V319h-1zM140 318h1V322h-1zM141 320h1V322h-1zM142 318h1V321h-1zM143 317h1V319h-1zM144 317h1V318h-1zM145 316h1V318h-1zM146 316h1V317h-1zM147 316h1V318h-1zM148 317h1V319h-1zM149 317h1V319h-1zM150 317h1V319h-1zM151 316h1V319h-1zM152 315h1V317h-1zM153 315h1V316h-1zM154 315h1V318h-1zM155 317h1V319h-1zM156 314h1V319h-1zM157 314h1V318h-1zM158 317h1V319h-1zM159 315h1V319h-1zM160 315h1V317h-1zM161 316h1V318h-1zM162 313h1V318h-1zM163 313h1V314h-1zM164 313h1V316h-1zM165 315h1V316h-1zM166 315h1V317h-1zM167 314h1V317h-1zM168 314h1V315h-1zM169 314h1V315h-1zM170 314h1V315h-1zM171 314h1V316h-1zM172 315h1V316h-1zM173 314h1V316h-1zM174 314h1V315h-1zM175 313h1V315h-1zM176 313h1V314h-1zM177 313h1V314h-1zM178 313h1V314h-1zM179 313h1V316h-1zM180 312h1V316h-1zM181 312h1V314h-1zM182 313h1V316h-1zM183 315h1V316h-1zM184 314h1V316h-1zM185 314h1V315h-1zM186 312h1V315h-1zM187 312h1V315h-1zM188 313h1V315h-1zM189 312h1V314h-1zM190 312h1V315h-1zM191 314h1V316h-1zM192 314h1V316h-1zM193 311h1V315h-1zM194 311h1V314h-1zM195 312h1V314h-1zM196 312h1V313h-1zM197 312h1V313h-1zM198 310h1V313h-1zM199 310h1V314h-1zM200 312h1V314h-1zM201 312h1V314h-1zM202 312h1V314h-1zM203 312h1V313h-1zM204 312h1V313h-1zM205 310h1V313h-1zM206 310h1V313h-1zM207 311h1V313h-1zM208 311h1V312h-1zM209 310h1V312h-1zM210 310h1V312h-1zM211 309h1V312h-1zM212 309h1V310h-1zM213 309h1V311h-1zM214 310h1V311h-1zM215 309h1V311h-1zM216 308h1V310h-1zM217 308h1V311h-1zM218 310h1V312h-1zM219 310h1V312h-1zM220 309h1V311h-1zM221 307h1V310h-1zM222 307h1V310h-1zM223 309h1V310h-1zM224 307h1V310h-1zM225 307h1V309h-1zM226 307h1V309h-1zM227 307h1V310h-1zM228 307h1V310h-1zM229 307h1V308h-1zM230 307h1V309h-1zM231 306h1V309h-1zM232 306h1V308h-1zM233 307h1V309h-1zM234 306h1V309h-1zM235 306h1V309h-1zM236 307h1V309h-1zM237 307h1V308h-1zM238 306h1V308h-1zM239 304h1V307h-1zM240 304h1V308h-1zM241 306h1V308h-1zM242 306h1V309h-1zM243 306h1V309h-1zM244 304h1V307h-1zM245 304h1V308h-1zM246 307h1V308h-1zM247 305h1V308h-1zM248 303h1V306h-1zM249 303h1V306h-1zM250 304h1V306h-1zM251 303h1V305h-1zM252 303h1V304h-1zM253 302h1V304h-1zM254 302h1V306h-1zM255 302h1V306h-1zM256 302h1V305h-1zM257 303h1V305h-1zM258 303h1V304h-1zM259 303h1V305h-1zM260 301h1V305h-1zM261 301h1V304h-1zM262 302h1V304h-1zM263 302h1V304h-1zM264 303h1V304h-1zM265 302h1V304h-1zM266 302h1V304h-1zM267 303h1V304h-1zM268 303h1V304h-1zM269 303h1V304h-1zM270 300h1V304h-1zM271 300h1V301h-1zM272 300h1V301h-1zM273 300h1V302h-1zM274 301h1V304h-1zM275 302h1V304h-1zM276 302h1V304h-1zM277 299h1V304h-1zM278 299h1V301h-1zM279 300h1V302h-1zM280 299h1V302h-1zM281 298h1V300h-1zM282 298h1V301h-1zM283 298h1V301h-1zM284 298h1V299h-1zM285 298h1V299h-1zM286 298h1V300h-1zM287 299h1V301h-1zM288 300h1V302h-1zM289 300h1V302h-1zM290 300h1V301h-1zM291 299h1V301h-1zM292 297h1V300h-1zM293 297h1V299h-1zM294 298h1V299h-1zM295 298h1V300h-1zM296 298h1V300h-1zM297 297h1V299h-1zM298 296h1V298h-1zM299 296h1V298h-1zM300 296h1V298h-1zM301 296h1V299h-1zM302 294h1V299h-1zM303 294h1V295h-1zM304 294h1V295h-1zM305 294h1V295h-1zM306 294h1V296h-1zM307 295h1V297h-1zM308 296h1V297h-1zM309 292h1V297h-1zM310 292h1V293h-1zM311 292h1V294h-1zM312 293h1V296h-1zM313 293h1V296h-1zM314 292h1V294h-1zM315 292h1V293h-1zM316 292h1V295h-1zM317 292h1V295h-1zM318 292h1V293h-1zM319 292h1V295h-1zM320 293h1V295h-1zM321 293h1V295h-1zM322 293h1V295h-1zM323 293h1V294h-1zM324 293h1V294h-1zM325 291h1V294h-1zM326 291h1V294h-1zM327 292h1V294h-1zM328 292h1V293h-1zM329 290h1V293h-1zM330 290h1V293h-1zM331 290h1V293h-1zM332 290h1V292h-1zM333 290h1V292h-1zM334 290h1V291h-1zM335 290h1V291h-1zM336 289h1V291h-1zM337 289h1V291h-1zM338 289h1V291h-1zM339 289h1V290h-1zM340 289h1V290h-1zM341 289h1V291h-1zM342 290h1V292h-1zM343 288h1V292h-1zM344 288h1V291h-1zM345 290h1V291h-1zM346 288h1V291h-1zM347 288h1V292h-1zM348 289h1V292h-1zM349 288h1V290h-1zM350 288h1V291h-1zM351 288h1V291h-1zM352 288h1V289h-1zM353 288h1V289h-1zM354 288h1V290h-1zM355 289h1V290h-1zM356 289h1V355h-1zM357 289h1V355h-1zM358 287h1V290h-1zM359 287h1V290h-1zM360 289h1V355h-1zM361 287h1V355h-1zM362 285h1V288h-1zM363 285h1V288h-1zM364 287h1V355h-1zM365 286h1V355h-1zM366 284h1V287h-1zM367 284h1V355h-1zM368 284h1V355h-1zM369 284h1V287h-1zM370 286h1V355h-1zM371 284h1V355h-1zM372 284h1V355h-1zM373 284h1V355h-1zM374 284h1V286h-1zM375 285h1V355h-1zM376 284h1V355h-1zM377 282h1V285h-1zM378 282h1V285h-1zM379 283h1V285h-1zM380 282h1V284h-1zM381 282h1V283h-1zM382 282h1V283h-1zM383 282h1V285h-1zM384 283h1V285h-1zM385 283h1V355h-1zM386 284h1V355h-1zM387 284h1V355h-1zM388 284h1V355h-1zM389 282h1V285h-1zM390 282h1V355h-1zM391 283h1V355h-1zM392 283h1V355h-1zM393 281h1V355h-1zM394 281h1V283h-1zM395 282h1V355h-1zM396 282h1V355h-1zM397 282h1V284h-1zM398 283h1V355h-1zM399 281h1V355h-1zM400 281h1V282h-1zM401 281h1V355h-1zM402 281h1V355h-1zM403 281h1V283h-1zM404 282h1V355h-1zM405 285h1V355h-1zM406 285h1V355h-1zM407 354h1V355h-1zM408 354h1V355h-1zM409 354h1V355h-1zM410 354h1V355h-1zM411 354h1V355h-1zM412 354h1V355h-1zM413 354h1V355h-1zM414 354h1V355h-1zM415 354h1V355h-1zM416 354h1V355h-1zM417 354h1V355h-1zM418 354h1V355h-1zM419 354h1V355h-1zM420 354h1V355h-1zM421 354h1V355h-1zM422 354h1V355h-1zM423 354h1V355h-1zM424 354h1V355h-1z"/>
<path fill="#ff00ff" d="M62 320h1V322h-1zM63 323h1V325h-1zM64 323h1V325h-1zM65 321h1V323h-1zM66 323h1V324h-1zM67 319h1V321h-1zM68 320h1V323h-1zM69 319h1V321h-1zM70 321h1V323h-1zM71 321h1V324h-1zM72 324h1V326h-1zM73 321h1V323h-1zM74 322h1V324h-1zM75 324h1V327h-1zM76 321h1V323h-1zM77 323h1V325h-1zM78 324h1V327h-1zM79 321h1V322h-1zM80 320h1V323h-1zM81 324h1V325h-1zM82 322h1V323h-1zM83 320h1V323h-1zM84 319h1V321h-1zM85 321h1V323h-1zM86 320h1V322h-1zM87 321h1V323h-1zM88 320h1V323h-1zM89 320h1V322h-1zM90 321h1V324h-1zM91 320h1V322h-1zM92 318h1V320h-1zM93 321h1V323h-1zM94 320h1V322h-1zM95 322h1V324h-1zM96 320h1V321h-1zM97 321h1V323h-1zM98 321h1V323h-1zM99 321h1V323h-1zM100 319h1V320h-1zM101 321h1V324h-1zM102 319h1V321h-1zM103 321h1V323h-1zM104 323h1V325h-1zM105 321h1V324h-1zM106 322h1V323h-1zM107 322h1V324h-1zM108 320h1V321h-1zM109 320h1V322h-1zM110 322h1V323h-1zM111 321h1V324h-1zM112 318h1V321h-1zM113 320h1V321h-1zM114 319h1V322h-1zM115 320h1V323h-1zM116 319h1V321h-1zM117 321h1V323h-1zM118 320h1V321h-1zM119 318h1V320h-1zM120 320h1V322h-1zM121 319h1V321h-1zM122 320h1V323h-1zM123 319h1V321h-1zM124 317h1V319h-1zM125 322h1V325h-1zM126 322h1V324h-1zM127 322h1V325h-1zM128 321h1V322h-1zM129 320h1V322h-1zM130 322h1V325h-1zM131 318h1V320h-1zM132 319h1V322h-1zM133 317h1V320h-1zM134 316h1V318h-1zM135 319h1V321h-1zM136 321h1V323h-1zM137 319h1V321h-1zM138 317h1V319h-1zM139 318h1V321h-1zM140 321h1V323h-1zM141 319h1V321h-1zM142 316h1V319h-1zM143 317h1V320h-1zM144 317h1V319h-1zM145 316h1V319h-1zM146 316h1V319h-1zM147 317h1V320h-1zM148 318h1V319h-1zM149 317h1V320h-1zM150 318h1V319h-1zM151 316h1V317h-1zM152 314h1V316h-1zM153 315h1V318h-1zM154 316h1V318h-1zM155 318h1V320h-1zM156 314h1V317h-1zM157 317h1V320h-1zM158 318h1V320h-1zM159 315h1V317h-1zM160 316h1V318h-1zM161 317h1V319h-1zM162 313h1V315h-1zM163 313h1V315h-1zM164 315h1V318h-1zM165 314h1V316h-1zM166 316h1V319h-1zM167 313h1V315h-1zM168 314h1V316h-1zM169 313h1V315h-1zM170 314h1V316h-1zM171 315h1V317h-1zM172 315h1V317h-1zM173 314h1V316h-1zM174 314h1V316h-1zM175 313h1V315h-1zM176 313h1V316h-1zM177 312h1V314h-1zM178 313h1V315h-1zM179 315h1V318h-1zM180 311h1V313h-1zM181 313h1V316h-1zM182 315h1V318h-1zM183 314h1V316h-1zM184 314h1V316h-1zM185 314h1V317h-1zM186 312h1V313h-1zM187 313h1V315h-1zM188 313h1V315h-1zM189 312h1V313h-1zM190 313h1V315h-1zM191 315h1V316h-1zM192 314h1V317h-1zM193 310h1V312h-1zM194 313h1V314h-1zM195 312h1V315h-1zM196 311h1V313h-1zM197 312h1V315h-1zM198 309h1V311h-1zM199 312h1V314h-1zM200 312h1V315h-1zM201 313h1V315h-1zM202 311h1V313h-1zM203 312h1V314h-1zM204 311h1V313h-1zM205 310h1V312h-1zM206 312h1V314h-1zM207 310h1V312h-1zM208 310h1V312h-1zM209 309h1V311h-1zM210 310h1V312h-1zM211 309h1V312h-1zM212 309h1V311h-1zM213 309h1V311h-1zM214 310h1V311h-1zM215 309h1V310h-1zM216 307h1V309h-1zM217 309h1V311h-1zM218 311h1V314h-1zM219 310h1V311h-1zM220 308h1V310h-1zM221 307h1V309h-1zM222 309h1V311h-1zM223 308h1V310h-1zM224 307h1V309h-1zM225 307h1V309h-1zM226 306h1V308h-1zM227 309h1V311h-1zM228 307h1V309h-1zM229 307h1V310h-1zM230 308h1V310h-1zM231 306h1V309h-1zM232 306h1V308h-1zM233 307h1V309h-1zM234 306h1V307h-1zM235 308h1V309h-1zM236 306h1V308h-1zM237 306h1V308h-1zM238 306h1V308h-1zM239 304h1V305h-1zM240 307h1V308h-1zM241 305h1V307h-1zM242 308h1V311h-1zM243 305h1V307h-1zM244 303h1V305h-1zM245 307h1V308h-1zM246 307h1V310h-1zM247 305h1V307h-1zM248 303h1V306h-1zM249 304h1V306h-1zM250 304h1V305h-1zM251 302h1V304h-1zM252 302h1V304h-1zM253 302h1V304h-1zM254 305h1V306h-1zM255 301h1V303h-1zM256 304h1V305h-1zM257 302h1V304h-1zM258 303h1V306h-1zM259 304h1V306h-1zM260 300h1V302h-1zM261 302h1V304h-1zM262 302h1V303h-1zM263 303h1V305h-1zM264 303h1V304h-1zM265 301h1V303h-1zM266 302h1V304h-1zM267 303h1V304h-1zM268 303h1V305h-1zM269 303h1V306h-1zM270 300h1V301h-1zM271 300h1V301h-1zM272 300h1V302h-1zM273 300h1V302h-1zM274 302h1V304h-1zM275 302h1V303h-1zM276 303h1V306h-1zM277 298h1V300h-1zM278 300h1V301h-1zM279 300h1V302h-1zM280 299h1V301h-1zM281 298h1V299h-1zM282 300h1V301h-1zM283 298h1V301h-1zM284 297h1V299h-1zM285 298h1V300h-1zM286 299h1V300h-1zM287 300h1V303h-1zM288 301h1V303h-1zM289 299h1V301h-1zM290 300h1V301h-1zM291 299h1V301h-1zM292 297h1V299h-1zM293 298h1V301h-1zM294 296h1V299h-1zM295 298h1V300h-1zM296 297h1V299h-1zM297 297h1V299h-1zM298 296h1V297h-1zM299 296h1V298h-1zM300 295h1V297h-1zM301 298h1V300h-1zM302 293h1V295h-1zM303 294h1V297h-1zM304 294h1V296h-1zM305 294h1V296h-1zM306 295h1V296h-1zM307 295h1V297h-1zM308 296h1V297h-1zM309 292h1V293h-1zM310 292h1V294h-1zM311 293h1V295h-1zM312 294h1V296h-1zM313 293h1V296h-1zM314 292h1V295h-1zM315 292h1V293h-1zM316 294h1V295h-1zM317 291h1V293h-1zM318 292h1V294h-1zM319 294h1V296h-1zM320 293h1V294h-1zM321 294h1V295h-1zM322 292h1V294h-1zM323 293h1V295h-1zM324 293h1V294h-1zM325 291h1V294h-1zM326 292h1V294h-1zM327 292h1V293h-1zM328 292h1V295h-1zM329 290h1V293h-1zM330 292h1V293h-1zM331 290h1V291h-1zM332 290h1V292h-1zM333 289h1V291h-1zM334 289h1V291h-1zM335 288h1V291h-1zM336 289h1V291h-1zM337 289h1V291h-1zM338 288h1V290h-1zM339 289h1V292h-1zM340 289h1V291h-1zM341 290h1V292h-1zM342 291h1V294h-1zM343 288h1V291h-1zM344 289h1V291h-1zM345 289h1V291h-1zM346 287h1V289h-1zM347 291h1V293h-1zM348 288h1V290h-1zM349 288h1V291h-1zM350 290h1V292h-1zM351 288h1V291h-1zM352 288h1V290h-1zM353 287h1V289h-1zM354 289h1V291h-1zM355 289h1V292h-1zM357 289h1V290h-1zM358 286h1V288h-1zM359 289h1V292h-1zM361 286h1V288h-1zM362 284h1V286h-1zM363 287h1V289h-1zM365 286h1V289h-1zM366 283h1V285h-1zM368 284h1V285h-1zM369 286h1V289h-1zM371 284h1V286h-1zM373 284h1V287h-1zM374 285h1V287h-1zM376 284h1V285h-1zM377 282h1V285h-1zM378 283h1V285h-1zM379 283h1V285h-1zM380 282h1V284h-1zM381 281h1V283h-1zM382 281h1V283h-1zM383 284h1V285h-1zM384 283h1V284h-1zM386 284h1V287h-1zM388 284h1V285h-1zM389 282h1V283h-1zM391 282h1V284h-1zM393 281h1V283h-1zM394 282h1V283h-1zM396 282h1V284h-1zM397 283h1V285h-1zM399 280h1V282h-1zM400 280h1V282h-1zM402 280h1V282h-1zM403 280h1V283h-1zM405 285h1V287h-1z"/>
<path fill="#ff00ff" d="M214 310h1V315h-1zM298 296h1V306h-1zM357 271h1V290h-1zM366 279h1V285h-1zM383 278h1V285h-1zM399 270h1V282h-1zM402 273h1V282h-1zM359 275h1V290h-1zM378 279h1V285h-1z"/>
<rect x="516" y="222" width="1" height="134" fill="#c0c0c0"/>
<text x="54.5" y="227" fill="#000" font-size="11" text-anchor="end" font-weight="normal">5000</text>
<text x="54.5" y="253" fill="#000" font-size="11" text-anchor="end" font-weight="normal">4000</text>
<text x="54.5" y="279" fill="#000" font-size="11" text-anchor="end" font-weight="normal">3000</text>
<text x="54.5" y="305" fill="#000" font-size="11" text-anchor="end" font-weight="normal">2000</text>
<text x="54.5" y="331" fill="#000" font-size="11" text-anchor="end" font-weight="normal">1000</text>
<text x="533" y="227" fill="#000" font-size="11" text-anchor="start" font-weight="normal">40</text>
<text x="533" y="254" fill="#000" font-size="11" text-anchor="start" font-weight="normal">32</text>
<text x="533" y="280" fill="#000" font-size="11" text-anchor="start" font-weight="normal">24</text>
<text x="533" y="306" fill="#000" font-size="11" text-anchor="start" font-weight="normal">16</text>
<text x="533" y="332" fill="#000" font-size="11" text-anchor="start" font-weight="normal">8</text>
<text x="63" y="367" fill="#000" font-size="11" text-anchor="middle" font-weight="normal">0.0</text>
<text x="115" y="367" fill="#000" font-size="11" text-anchor="middle" font-weight="normal">0.5</text>
<text x="167" y="367" fill="#000" font-size="11" text-anchor="middle" font-weight="normal">1.0</text>
<text x="219" y="367" fill="#000" font-size="11" text-anchor="middle" font-weight="normal">1.5</text>
<text x="271" y="367" fill="#000" font-size="11" text-anchor="middle" font-weight="normal">2.0</text>
<text x="323" y="367" fill="#000" font-size="11" text-anchor="middle" font-weight="normal">2.5</text>
<text x="375" y="367" fill="#000" font-size="11" text-anchor="middle" font-weight="normal">3.0</text>
<text x="427" y="367" fill="#000" font-size="11" text-anchor="middle" font-weight="normal">3.5</text>
<text x="479" y="367" fill="#000" font-size="11" text-anchor="middle" font-weight="normal">4.0</text>
<text x="531" y="367" fill="#000" font-size="11" text-anchor="middle" font-weight="normal">4.5</text>
<text x="273" y="68" fill="#000" font-size="11.3" text-anchor="start" font-weight="normal">recorded with SONY</text>
<text x="393" y="68" fill="#000" font-size="11" text-anchor="start" font-weight="normal">DVD RW DRU-500A</text>
<text x="505" y="68" fill="#000" font-size="11" text-anchor="start" font-weight="normal" textLength="25" lengthAdjust="spacing">v2.1a</text>
<rect x="18.5" y="374.5" width="169" height="62" fill="none" stroke="#808080"/>
<rect x="27" y="372" width="63" height="5" fill="#fff"/>
<rect x="28" y="371" width="8" height="8" fill="#000"/>
<rect x="29" y="372" width="6" height="6" fill="#00ffff"/>
<text x="41" y="378" fill="#000" font-size="11" text-anchor="start" font-weight="normal">PI Errors</text>
<path fill="#000" d="M28 383h10v1h-10zM41 383h1v1h-1zM45 383h1v1h-1zM32 384h1v1h-1zM41 384h1v1h-1zM44 384h6v1h-6zM29 385h1v1h-1zM32 385h1v1h-1zM36 385h1v1h-1zM41 385h1v1h-1zM44 385h1v1h-1zM49 385h1v1h-1zM29 386h1v1h-1zM32 386h1v1h-1zM36 386h1v1h-1zM39 386h4v1h-4zM49 386h1v1h-1zM30 387h1v1h-1zM32 387h1v1h-1zM35 387h1v1h-1zM41 387h1v1h-1zM45 387h3v1h-3zM49 387h1v1h-1zM52 387h1v1h-1zM32 388h1v1h-1zM41 388h1v1h-1zM49 388h1v1h-1zM27 389h12v1h-12zM41 389h1v1h-1zM49 389h1v1h-1zM32 390h1v1h-1zM41 390h1v1h-1zM44 390h4v1h-4zM49 390h1v1h-1zM32 391h1v1h-1zM41 391h2v1h-2zM49 391h1v1h-1zM52 391h1v1h-1zM32 392h1v1h-1zM39 392h2v1h-2zM49 392h1v1h-1zM32 393h1v1h-1zM47 393h3v1h-3z"/>
<text x="175" y="393" fill="#000070" font-size="11" text-anchor="end" font-weight="normal">405.27</text>
<path fill="#000" d="M29 401h8v1h-8zM44 401h1v1h-1zM29 402h8v1h-8zM44 402h1v1h-1zM29 403h1v1h-1zM36 403h1v1h-1zM44 403h1v1h-1zM29 404h8v1h-8zM40 404h10v1h-10zM27 405h12v1h-12zM44 405h2v1h-2zM52 405h1v1h-1zM29 406h1v1h-1zM32 406h1v1h-1zM44 406h2v1h-2zM29 407h9v1h-9zM44 407h1v1h-1zM46 407h1v1h-1zM29 408h4v1h-4zM34 408h1v1h-1zM37 408h1v1h-1zM43 408h1v1h-1zM46 408h2v1h-2zM29 409h1v1h-1zM32 409h1v1h-1zM34 409h1v1h-1zM36 409h1v1h-1zM42 409h1v1h-1zM47 409h1v1h-1zM52 409h1v1h-1zM27 410h6v1h-6zM35 410h2v1h-2zM41 410h1v1h-1zM48 410h2v1h-2zM32 411h3v1h-3zM37 411h2v1h-2zM40 411h1v1h-1zM49 411h1v1h-1z"/>
<text x="175" y="411" fill="#000070" font-size="11" text-anchor="end" font-weight="normal">2181</text>
<path fill="#000" d="M31 419h2v1h-2zM39 419h4v1h-4zM46 419h1v1h-1zM30 420h1v1h-1zM33 420h1v1h-1zM46 420h1v1h-1zM29 421h1v1h-1zM34 421h1v1h-1zM38 421h6v1h-6zM46 421h1v1h-1zM27 422h10v1h-10zM46 422h1v1h-1zM39 423h4v1h-4zM44 423h6v1h-6zM56 423h1v1h-1zM39 424h4v1h-4zM46 424h1v1h-1zM28 425h8v1h-8zM46 425h1v1h-1zM28 426h1v1h-1zM35 426h1v1h-1zM39 426h4v1h-4zM46 426h1v1h-1zM28 427h1v1h-1zM35 427h1v1h-1zM39 427h1v1h-1zM42 427h1v1h-1zM46 427h1v1h-1zM56 427h1v1h-1zM28 428h8v1h-8zM39 428h4v1h-4zM46 428h1v1h-1zM28 429h1v1h-1zM35 429h1v1h-1zM39 429h1v1h-1zM46 429h1v1h-1z"/>
<text x="175" y="429" fill="#000070" font-size="11" text-anchor="end" font-weight="normal">4712234</text>
<rect x="198.5" y="374.5" width="169" height="62" fill="none" stroke="#808080"/>
<rect x="207" y="372" width="72" height="5" fill="#fff"/>
<rect x="208" y="371" width="8" height="8" fill="#000"/>
<rect x="209" y="372" width="6" height="6" fill="#ffff00"/>
<text x="221" y="378" fill="#000" font-size="11" text-anchor="start" font-weight="normal">PI Failures</text>
<path fill="#000" d="M208 383h10v1h-10zM221 383h1v1h-1zM225 383h1v1h-1zM212 384h1v1h-1zM221 384h1v1h-1zM224 384h6v1h-6zM209 385h1v1h-1zM212 385h1v1h-1zM216 385h1v1h-1zM221 385h1v1h-1zM224 385h1v1h-1zM229 385h1v1h-1zM209 386h1v1h-1zM212 386h1v1h-1zM216 386h1v1h-1zM219 386h4v1h-4zM229 386h1v1h-1zM210 387h1v1h-1zM212 387h1v1h-1zM215 387h1v1h-1zM221 387h1v1h-1zM225 387h3v1h-3zM229 387h1v1h-1zM232 387h1v1h-1zM212 388h1v1h-1zM221 388h1v1h-1zM229 388h1v1h-1zM207 389h12v1h-12zM221 389h1v1h-1zM229 389h1v1h-1zM212 390h1v1h-1zM221 390h1v1h-1zM224 390h4v1h-4zM229 390h1v1h-1zM212 391h1v1h-1zM221 391h2v1h-2zM229 391h1v1h-1zM232 391h1v1h-1zM212 392h1v1h-1zM219 392h2v1h-2zM229 392h1v1h-1zM212 393h1v1h-1zM227 393h3v1h-3z"/>
<text x="357" y="393" fill="#000070" font-size="11" text-anchor="end" font-weight="normal">339.27</text>
<path fill="#000" d="M209 401h8v1h-8zM224 401h1v1h-1zM209 402h8v1h-8zM224 402h1v1h-1zM209 403h1v1h-1zM216 403h1v1h-1zM224 403h1v1h-1zM209 404h8v1h-8zM220 404h10v1h-10zM207 405h12v1h-12zM224 405h2v1h-2zM232 405h1v1h-1zM209 406h1v1h-1zM212 406h1v1h-1zM224 406h2v1h-2zM209 407h9v1h-9zM224 407h1v1h-1zM226 407h1v1h-1zM209 408h4v1h-4zM214 408h1v1h-1zM217 408h1v1h-1zM223 408h1v1h-1zM226 408h2v1h-2zM209 409h1v1h-1zM212 409h1v1h-1zM214 409h1v1h-1zM216 409h1v1h-1zM222 409h1v1h-1zM227 409h1v1h-1zM232 409h1v1h-1zM207 410h6v1h-6zM215 410h2v1h-2zM221 410h1v1h-1zM228 410h2v1h-2zM212 411h3v1h-3zM217 411h2v1h-2zM220 411h1v1h-1zM229 411h1v1h-1z"/>
<text x="357" y="411" fill="#000070" font-size="11" text-anchor="end" font-weight="normal">2896</text>
<path fill="#000" d="M211 419h2v1h-2zM219 419h4v1h-4zM226 419h1v1h-1zM210 420h1v1h-1zM213 420h1v1h-1zM226 420h1v1h-1zM209 421h1v1h-1zM214 421h1v1h-1zM218 421h6v1h-6zM226 421h1v1h-1zM207 422h10v1h-10zM226 422h1v1h-1zM219 423h4v1h-4zM224 423h6v1h-6zM236 423h1v1h-1zM219 424h4v1h-4zM226 424h1v1h-1zM208 425h8v1h-8zM226 425h1v1h-1zM208 426h1v1h-1zM215 426h1v1h-1zM219 426h4v1h-4zM226 426h1v1h-1zM208 427h1v1h-1zM215 427h1v1h-1zM219 427h1v1h-1zM222 427h1v1h-1zM226 427h1v1h-1zM236 427h1v1h-1zM208 428h8v1h-8zM219 428h4v1h-4zM226 428h1v1h-1zM208 429h1v1h-1zM215 429h1v1h-1zM219 429h1v1h-1zM226 429h1v1h-1z"/>
<text x="357" y="429" fill="#000070" font-size="11" text-anchor="end" font-weight="normal">3559180</text>
<rect x="379.5" y="374.5" width="169" height="46" fill="none" stroke="#808080"/>
<rect x="388" y="372" width="39" height="5" fill="#fff"/>
<rect x="389" y="371" width="8" height="8" fill="#000"/>
<rect x="390" y="372" width="6" height="6" fill="#ff00ff"/>
<text x="402" y="378" fill="#000" font-size="11" text-anchor="start" font-weight="normal">Jitter</text>
<path fill="#000" d="M389 383h10v1h-10zM402 383h1v1h-1zM406 383h1v1h-1zM393 384h1v1h-1zM402 384h1v1h-1zM405 384h6v1h-6zM390 385h1v1h-1zM393 385h1v1h-1zM397 385h1v1h-1zM402 385h1v1h-1zM405 385h1v1h-1zM410 385h1v1h-1zM390 386h1v1h-1zM393 386h1v1h-1zM397 386h1v1h-1zM400 386h4v1h-4zM410 386h1v1h-1zM391 387h1v1h-1zM393 387h1v1h-1zM396 387h1v1h-1zM402 387h1v1h-1zM406 387h3v1h-3zM410 387h1v1h-1zM413 387h1v1h-1zM393 388h1v1h-1zM402 388h1v1h-1zM410 388h1v1h-1zM388 389h12v1h-12zM402 389h1v1h-1zM410 389h1v1h-1zM393 390h1v1h-1zM402 390h1v1h-1zM405 390h4v1h-4zM410 390h1v1h-1zM393 391h1v1h-1zM402 391h2v1h-2zM410 391h1v1h-1zM413 391h1v1h-1zM393 392h1v1h-1zM400 392h2v1h-2zM410 392h1v1h-1zM393 393h1v1h-1zM408 393h3v1h-3z"/>
<text x="538" y="393" fill="#000070" font-size="11" text-anchor="end" font-weight="normal">13.20 %</text>
<path fill="#000" d="M390 401h8v1h-8zM405 401h1v1h-1zM390 402h8v1h-8zM405 402h1v1h-1zM390 403h1v1h-1zM397 403h1v1h-1zM405 403h1v1h-1zM390 404h8v1h-8zM401 404h10v1h-10zM388 405h12v1h-12zM405 405h2v1h-2zM413 405h1v1h-1zM390 406h1v1h-1zM393 406h1v1h-1zM405 406h2v1h-2zM390 407h9v1h-9zM405 407h1v1h-1zM407 407h1v1h-1zM390 408h4v1h-4zM395 408h1v1h-1zM398 408h1v1h-1zM404 408h1v1h-1zM407 408h2v1h-2zM390 409h1v1h-1zM393 409h1v1h-1zM395 409h1v1h-1zM397 409h1v1h-1zM403 409h1v1h-1zM408 409h1v1h-1zM413 409h1v1h-1zM388 410h6v1h-6zM396 410h2v1h-2zM402 410h1v1h-1zM409 410h2v1h-2zM393 411h3v1h-3zM398 411h2v1h-2zM401 411h1v1h-1zM410 411h1v1h-1z"/>
<text x="538" y="411" fill="#000070" font-size="11" text-anchor="end" font-weight="normal">25.6 %</text>
<text x="389" y="434" fill="#000" font-size="11" text-anchor="start" font-weight="normal">PO Failures:</text>
<text x="537" y="434" fill="#000070" font-size="11" text-anchor="end" font-weight="normal">2408244</text>
<rect x="562.5" y="59.5" width="67" height="18" rx="2" fill="#fff" stroke="#000080" shape-rendering="auto"/>
<rect x="564" y="70" width="64" height="6" fill="#c0c0c0"/>
<path fill="#000" d="M583 63h4v1h-4zM589 63h4v1h-4zM597 63h1v1h-1zM602 63h1v1h-1zM583 64h4v1h-4zM589 64h4v1h-4zM597 64h1v1h-1zM602 64h1v1h-1zM583 65h1v1h-1zM586 65h1v1h-1zM589 65h1v1h-1zM592 65h1v1h-1zM595 65h5v1h-5zM602 65h1v1h-1zM604 65h1v1h-1zM583 66h4v1h-4zM589 66h4v1h-4zM597 66h1v1h-1zM599 66h1v1h-1zM601 66h1v1h-1zM605 66h1v1h-1zM583 67h1v1h-1zM592 67h1v1h-1zM596 67h1v1h-1zM599 67h6v1h-6zM606 67h1v1h-1zM583 68h1v1h-1zM585 68h6v1h-6zM592 68h1v1h-1zM596 68h1v1h-1zM599 68h1v1h-1zM583 69h1v1h-1zM586 69h1v1h-1zM589 69h1v1h-1zM592 69h1v1h-1zM596 69h1v1h-1zM598 69h1v1h-1zM601 69h5v1h-5zM583 70h10v1h-10zM597 70h2v1h-2zM601 70h1v1h-1zM605 70h1v1h-1zM583 71h1v1h-1zM586 71h1v1h-1zM589 71h1v1h-1zM592 71h1v1h-1zM597 71h3v1h-3zM601 71h1v1h-1zM605 71h1v1h-1zM583 72h1v1h-1zM586 72h1v1h-1zM589 72h1v1h-1zM592 72h1v1h-1zM597 72h1v1h-1zM599 72h1v1h-1zM601 72h5v1h-5zM583 73h1v1h-1zM585 73h1v1h-1zM589 73h1v1h-1zM591 73h2v1h-2zM596 73h1v1h-1zM601 73h1v1h-1zM605 73h1v1h-1z"/>
<rect x="654.5" y="59.5" width="67" height="18" rx="2" fill="#fff" stroke="#000080" shape-rendering="auto"/>
<rect x="656" y="70" width="64" height="6" fill="#c0c0c0"/>
<path fill="#000" d="M670 62h1v1h-1zM675 62h1v1h-1zM681 62h10v1h-10zM670 63h1v1h-1zM675 63h4v1h-4zM688 63h2v1h-2zM669 64h1v1h-1zM671 64h1v1h-1zM674 64h1v1h-1zM678 64h1v1h-1zM687 64h2v1h-2zM669 65h1v1h-1zM671 65h1v1h-1zM673 65h3v1h-3zM677 65h1v1h-1zM686 65h1v1h-1zM670 66h1v1h-1zM672 66h2v1h-2zM676 66h1v1h-1zM686 66h1v1h-1zM668 67h5v1h-5zM675 67h3v1h-3zM686 67h1v1h-1zM670 68h1v1h-1zM674 68h1v1h-1zM678 68h1v1h-1zM686 68h1v1h-1zM669 69h2v1h-2zM672 69h2v1h-2zM675 69h3v1h-3zM686 69h1v1h-1zM669 70h2v1h-2zM672 70h1v1h-1zM686 70h1v1h-1zM668 71h1v1h-1zM670 71h1v1h-1zM674 71h3v1h-3zM686 71h1v1h-1zM670 72h1v1h-1zM677 72h1v1h-1zM683 72h4v1h-4z"/>
<path fill="#000" d="M695 62h1v1h-1zM703 62h1v1h-1zM694 63h1v1h-1zM696 63h1v1h-1zM702 63h3v1h-3zM693 64h1v1h-1zM697 64h1v1h-1zM702 64h1v1h-1zM705 64h1v1h-1zM693 65h1v1h-1zM698 65h1v1h-1zM701 65h1v1h-1zM705 65h1v1h-1zM693 66h1v1h-1zM698 66h1v1h-1zM700 66h1v1h-1zM705 66h1v1h-1zM693 67h1v1h-1zM699 67h2v1h-2zM705 67h1v1h-1zM693 68h1v1h-1zM698 68h1v1h-1zM700 68h1v1h-1zM705 68h1v1h-1zM693 69h1v1h-1zM697 69h2v1h-2zM701 69h1v1h-1zM705 69h1v1h-1zM693 70h1v1h-1zM697 70h1v1h-1zM702 70h1v1h-1zM705 70h1v1h-1zM694 71h1v1h-1zM696 71h1v1h-1zM702 71h3v1h-3zM695 72h1v1h-1zM703 72h1v1h-1z"/>
<rect x="696" y="73" width="8" height="1" fill="#000"/>
<rect x="563" y="92" width="158" height="1" fill="#c0c0c0"/>
<rect x="563" y="164" width="158" height="1" fill="#c0c0c0"/>
<rect x="561" y="94" width="1" height="69" fill="#c0c0c0"/>
<rect x="722" y="94" width="1" height="69" fill="#c0c0c0"/>
<rect x="562" y="93" width="1" height="1" fill="#c0c0c0"/>
<rect x="721" y="93" width="1" height="1" fill="#c0c0c0"/>
<rect x="562" y="163" width="1" height="1" fill="#c0c0c0"/>
<rect x="721" y="163" width="1" height="1" fill="#c0c0c0"/>
<rect x="566" y="86" width="64" height="12" fill="#fff"/>
<path fill="#0000ff" d="M579 86h1v1h-1zM601 86h1v1h-1zM607 86h1v1h-1zM609 86h7v1h-7zM618 86h1v1h-1zM621 86h5v1h-5zM571 87h6v1h-6zM578 87h1v1h-1zM580 87h1v1h-1zM588 87h8v1h-8zM600 87h6v1h-6zM607 87h1v1h-1zM612 87h1v1h-1zM616 87h6v1h-6zM625 87h1v1h-1zM586 88h1v1h-1zM595 88h1v1h-1zM600 88h1v1h-1zM605 88h4v1h-4zM610 88h6v1h-6zM618 88h1v1h-1zM621 88h1v1h-1zM625 88h1v1h-1zM585 89h1v1h-1zM594 89h1v1h-1zM599 89h1v1h-1zM605 89h1v1h-1zM607 89h1v1h-1zM609 89h13v1h-13zM624 89h2v1h-2zM570 90h10v1h-10zM584 90h1v1h-1zM593 90h1v1h-1zM598 90h1v1h-1zM605 90h1v1h-1zM607 90h1v1h-1zM616 90h1v1h-1zM619 90h1v1h-1zM621 90h1v1h-1zM574 91h1v1h-1zM583 91h2v1h-2zM593 91h1v1h-1zM604 91h2v1h-2zM607 91h1v1h-1zM610 91h16v1h-16zM574 92h1v1h-1zM580 92h3v1h-3zM584 92h1v1h-1zM592 92h2v1h-2zM604 92h1v1h-1zM607 92h1v1h-1zM610 92h6v1h-6zM618 92h1v1h-1zM621 92h1v1h-1zM623 92h1v1h-1zM625 92h1v1h-1zM574 93h1v1h-1zM584 93h1v1h-1zM591 93h1v1h-1zM594 93h2v1h-2zM603 93h2v1h-2zM607 93h1v1h-1zM610 93h1v1h-1zM615 93h7v1h-7zM623 93h1v1h-1zM625 93h1v1h-1zM574 94h1v1h-1zM584 94h1v1h-1zM589 94h2v1h-2zM595 94h2v1h-2zM602 94h2v1h-2zM607 94h1v1h-1zM610 94h6v1h-6zM618 94h1v1h-1zM621 94h1v1h-1zM624 94h1v1h-1zM573 95h1v1h-1zM584 95h1v1h-1zM588 95h1v1h-1zM596 95h1v1h-1zM600 95h2v1h-2zM607 95h1v1h-1zM610 95h1v1h-1zM615 95h1v1h-1zM618 95h1v1h-1zM621 95h1v1h-1zM623 95h1v1h-1zM625 95h1v1h-1zM572 96h1v1h-1zM584 96h1v1h-1zM599 96h2v1h-2zM607 96h1v1h-1zM610 96h1v1h-1zM613 96h3v1h-3zM618 96h1v1h-1zM621 96h2v1h-2zM626 96h1v1h-1z"/>
<path fill="#000" d="M595 102h1v1h-1zM572 103h1v1h-1zM585 103h1v1h-1zM594 103h1v1h-1zM596 103h1v1h-1zM572 104h5v1h-5zM584 104h1v1h-1zM586 104h10v1h-10zM571 105h1v1h-1zM577 105h1v1h-1zM582 105h2v1h-2zM594 105h1v1h-1zM570 106h1v1h-1zM576 106h1v1h-1zM581 106h2v1h-2zM594 106h1v1h-1zM569 107h1v1h-1zM571 107h2v1h-2zM576 107h1v1h-1zM579 107h2v1h-2zM582 107h1v1h-1zM593 107h1v1h-1zM596 107h1v1h-1zM573 108h1v1h-1zM575 108h4v1h-4zM582 108h1v1h-1zM593 108h1v1h-1zM574 109h2v1h-2zM582 109h1v1h-1zM593 109h1v1h-1zM574 110h1v1h-1zM582 110h1v1h-1zM592 110h1v1h-1zM573 111h1v1h-1zM582 111h1v1h-1zM591 111h2v1h-2zM596 111h1v1h-1zM571 112h2v1h-2zM582 112h1v1h-1zM589 112h3v1h-3zM570 113h2v1h-2zM588 113h2v1h-2z"/>
<text x="617" y="111" fill="#000070" font-size="11" text-anchor="start" font-weight="normal">DVD-R</text>
<text x="569" y="126" fill="#000" font-size="11" text-anchor="start" font-weight="normal">ID:</text>
<path fill="#000" d="M569 132h8v1h-8zM583 132h1v1h-1zM589 132h1v1h-1zM569 133h1v1h-1zM576 133h1v1h-1zM583 133h1v1h-1zM589 133h1v1h-1zM569 134h1v1h-1zM576 134h1v1h-1zM582 134h1v1h-1zM589 134h1v1h-1zM569 135h1v1h-1zM576 135h1v1h-1zM582 135h1v1h-1zM584 135h8v1h-8zM569 136h8v1h-8zM581 136h2v1h-2zM589 136h1v1h-1zM594 136h1v1h-1zM569 137h1v1h-1zM576 137h1v1h-1zM580 137h3v1h-3zM585 137h1v1h-1zM589 137h1v1h-1zM569 138h1v1h-1zM576 138h1v1h-1zM582 138h1v1h-1zM585 138h2v1h-2zM589 138h1v1h-1zM569 139h1v1h-1zM576 139h1v1h-1zM582 139h1v1h-1zM586 139h1v1h-1zM589 139h1v1h-1zM569 140h1v1h-1zM576 140h1v1h-1zM582 140h1v1h-1zM589 140h1v1h-1zM594 140h1v1h-1zM569 141h8v1h-8zM582 141h1v1h-1zM589 141h1v1h-1zM569 142h1v1h-1zM576 142h1v1h-1zM582 142h1v1h-1zM587 142h3v1h-3z"/>
<text x="617" y="141" fill="#000070" font-size="11" text-anchor="start" font-weight="normal" textLength="82" lengthAdjust="spacing">8 February 2005</text>
<text x="569" y="156" fill="#000" font-size="11" text-anchor="start" font-weight="normal">Label:</text>
<text x="617" y="156" fill="#000070" font-size="11" text-anchor="start" font-weight="normal">CDS_TEST_B2</text>
<rect x="563" y="174" width="158" height="1" fill="#c0c0c0"/>
<rect x="563" y="339" width="158" height="1" fill="#c0c0c0"/>
<rect x="561" y="176" width="1" height="162" fill="#c0c0c0"/>
<rect x="722" y="176" width="1" height="162" fill="#c0c0c0"/>
<rect x="562" y="175" width="1" height="1" fill="#c0c0c0"/>
<rect x="721" y="175" width="1" height="1" fill="#c0c0c0"/>
<rect x="562" y="338" width="1" height="1" fill="#c0c0c0"/>
<rect x="721" y="338" width="1" height="1" fill="#c0c0c0"/>
<rect x="566" y="168" width="48" height="12" fill="#fff"/>
<text x="569" y="178" fill="#0000ff" font-size="11" text-anchor="start" font-weight="normal">Settings</text>
<path fill="#000" d="M572 188h1v1h-1zM582 188h1v1h-1zM586 188h1v1h-1zM590 188h1v1h-1zM594 188h1v1h-1zM600 188h1v1h-1zM611 188h1v1h-1zM569 189h6v1h-6zM576 189h4v1h-4zM582 189h2v1h-2zM587 189h1v1h-1zM589 189h1v1h-1zM594 189h2v1h-2zM597 189h7v1h-7zM606 189h11v1h-11zM572 190h1v1h-1zM583 190h1v1h-1zM585 190h7v1h-7zM595 190h1v1h-1zM600 190h1v1h-1zM606 190h1v1h-1zM609 190h1v1h-1zM613 190h1v1h-1zM570 191h5v1h-5zM588 191h1v1h-1zM597 191h7v1h-7zM606 191h10v1h-10zM570 192h11v1h-11zM588 192h1v1h-1zM597 192h1v1h-1zM600 192h1v1h-1zM603 192h1v1h-1zM606 192h1v1h-1zM609 192h5v1h-5zM570 193h1v1h-1zM572 193h1v1h-1zM574 193h1v1h-1zM577 193h1v1h-1zM581 193h3v1h-3zM585 193h7v1h-7zM593 193h3v1h-3zM597 193h7v1h-7zM606 193h1v1h-1zM570 194h5v1h-5zM577 194h1v1h-1zM583 194h1v1h-1zM588 194h1v1h-1zM595 194h1v1h-1zM599 194h2v1h-2zM606 194h1v1h-1zM608 194h7v1h-7zM572 195h1v1h-1zM576 195h1v1h-1zM579 195h1v1h-1zM583 195h1v1h-1zM587 195h1v1h-1zM589 195h1v1h-1zM595 195h1v1h-1zM598 195h5v1h-5zM606 195h1v1h-1zM609 195h1v1h-1zM613 195h2v1h-2zM569 196h6v1h-6zM576 196h1v1h-1zM579 196h1v1h-1zM583 196h1v1h-1zM586 196h2v1h-2zM590 196h1v1h-1zM595 196h1v1h-1zM597 196h1v1h-1zM600 196h1v1h-1zM603 196h1v1h-1zM606 196h1v1h-1zM610 196h1v1h-1zM612 196h1v1h-1zM572 197h1v1h-1zM576 197h4v1h-4zM582 197h4v1h-4zM591 197h1v1h-1zM594 197h3v1h-3zM600 197h1v1h-1zM606 197h1v1h-1zM610 197h4v1h-4zM572 198h1v1h-1zM575 198h1v1h-1zM580 198h1v1h-1zM582 198h1v1h-1zM585 198h10v1h-10zM597 198h9v1h-9zM607 198h3v1h-3zM614 198h2v1h-2z"/>
<rect x="631" y="185" width="82" height="20" fill="#808080"/>
<rect x="632" y="186" width="80" height="18" fill="#c8c8c8"/>
<rect x="633" y="187" width="78" height="16" fill="#fff"/>
<rect x="696" y="187" width="16" height="16" fill="#e8e8e8"/>
<rect x="697" y="188" width="14" height="14" fill="#fff"/>
<rect x="697" y="194" width="14" height="8" fill="#c0c0c0"/>
<rect x="711" y="187" width="1" height="16" fill="#a0a0a0"/>
<rect x="696" y="202" width="16" height="1" fill="#a0a0a0"/>
<path d="M700.5 193 L704 196.5 L707.5 193" fill="none" stroke="#303030" stroke-width="1.6" shape-rendering="auto"/>
<path fill="#000" d="M636 189h8v1h-8zM652 189h1v1h-1zM636 190h8v1h-8zM652 190h1v1h-1zM636 191h1v1h-1zM643 191h1v1h-1zM652 191h1v1h-1zM636 192h8v1h-8zM648 192h10v1h-10zM634 193h12v1h-12zM652 193h2v1h-2zM636 194h1v1h-1zM639 194h1v1h-1zM652 194h2v1h-2zM636 195h9v1h-9zM652 195h1v1h-1zM654 195h1v1h-1zM636 196h4v1h-4zM641 196h1v1h-1zM644 196h1v1h-1zM651 196h1v1h-1zM654 196h2v1h-2zM636 197h1v1h-1zM639 197h1v1h-1zM641 197h1v1h-1zM643 197h1v1h-1zM650 197h1v1h-1zM655 197h1v1h-1zM634 198h6v1h-6zM642 198h2v1h-2zM649 198h1v1h-1zM656 198h2v1h-2zM639 199h3v1h-3zM644 199h2v1h-2zM648 199h1v1h-1zM657 199h1v1h-1z"/>
<path fill="#000" d="M569 214h4v1h-4zM575 214h4v1h-4zM583 214h1v1h-1zM588 214h1v1h-1zM569 215h4v1h-4zM575 215h4v1h-4zM583 215h1v1h-1zM588 215h1v1h-1zM569 216h1v1h-1zM572 216h1v1h-1zM575 216h1v1h-1zM578 216h1v1h-1zM581 216h5v1h-5zM588 216h1v1h-1zM590 216h1v1h-1zM569 217h4v1h-4zM575 217h4v1h-4zM583 217h1v1h-1zM585 217h1v1h-1zM587 217h1v1h-1zM591 217h1v1h-1zM569 218h1v1h-1zM578 218h1v1h-1zM582 218h1v1h-1zM585 218h6v1h-6zM592 218h1v1h-1zM569 219h1v1h-1zM571 219h6v1h-6zM578 219h1v1h-1zM582 219h1v1h-1zM585 219h1v1h-1zM569 220h1v1h-1zM572 220h1v1h-1zM575 220h1v1h-1zM578 220h1v1h-1zM582 220h1v1h-1zM584 220h1v1h-1zM587 220h5v1h-5zM569 221h10v1h-10zM583 221h2v1h-2zM587 221h1v1h-1zM591 221h1v1h-1zM569 222h1v1h-1zM572 222h1v1h-1zM575 222h1v1h-1zM578 222h1v1h-1zM583 222h3v1h-3zM587 222h1v1h-1zM591 222h1v1h-1zM569 223h1v1h-1zM572 223h1v1h-1zM575 223h1v1h-1zM578 223h1v1h-1zM583 223h1v1h-1zM585 223h1v1h-1zM587 223h5v1h-5zM569 224h1v1h-1zM571 224h1v1h-1zM575 224h1v1h-1zM577 224h2v1h-2zM582 224h1v1h-1zM587 224h1v1h-1zM591 224h1v1h-1z"/>
<rect x="631.5" y="209.5" width="69" height="17" fill="#fff" stroke="#c0c0c0"/>
<text x="635" y="222" fill="#000" font-size="11" text-anchor="start" font-weight="normal">0000 MB</text>
<path fill="#000" d="M571 237h1v1h-1zM576 237h1v1h-1zM582 237h10v1h-10zM596 237h1v1h-1zM600 237h1v1h-1zM606 237h10v1h-10zM571 238h1v1h-1zM576 238h4v1h-4zM589 238h2v1h-2zM595 238h1v1h-1zM600 238h1v1h-1zM606 238h1v1h-1zM609 238h1v1h-1zM612 238h1v1h-1zM615 238h1v1h-1zM570 239h1v1h-1zM572 239h1v1h-1zM575 239h1v1h-1zM579 239h1v1h-1zM588 239h2v1h-2zM595 239h1v1h-1zM597 239h7v1h-7zM606 239h10v1h-10zM570 240h1v1h-1zM572 240h1v1h-1zM574 240h3v1h-3zM578 240h1v1h-1zM587 240h1v1h-1zM595 240h1v1h-1zM602 240h1v1h-1zM605 240h12v1h-12zM571 241h1v1h-1zM573 241h2v1h-2zM577 241h1v1h-1zM587 241h1v1h-1zM594 241h2v1h-2zM598 241h1v1h-1zM602 241h1v1h-1zM606 241h1v1h-1zM608 241h7v1h-7zM569 242h5v1h-5zM576 242h3v1h-3zM587 242h1v1h-1zM593 242h1v1h-1zM595 242h1v1h-1zM598 242h1v1h-1zM602 242h1v1h-1zM606 242h1v1h-1zM608 242h1v1h-1zM614 242h1v1h-1zM571 243h1v1h-1zM575 243h1v1h-1zM579 243h1v1h-1zM587 243h1v1h-1zM595 243h1v1h-1zM598 243h1v1h-1zM602 243h1v1h-1zM606 243h1v1h-1zM608 243h7v1h-7zM570 244h2v1h-2zM573 244h2v1h-2zM576 244h3v1h-3zM587 244h1v1h-1zM595 244h1v1h-1zM598 244h1v1h-1zM601 244h1v1h-1zM606 244h1v1h-1zM608 244h7v1h-7zM570 245h2v1h-2zM573 245h1v1h-1zM587 245h1v1h-1zM595 245h1v1h-1zM601 245h1v1h-1zM606 245h1v1h-1zM608 245h7v1h-7zM569 246h1v1h-1zM571 246h1v1h-1zM575 246h3v1h-3zM587 246h1v1h-1zM595 246h10v1h-10zM606 246h11v1h-11zM571 247h1v1h-1zM578 247h1v1h-1zM584 247h4v1h-4zM595 247h1v1h-1zM606 247h1v1h-1z"/>
<rect x="631.5" y="232.5" width="69" height="17" fill="#fff" stroke="#c0c0c0"/>
<text x="635" y="246" fill="#000" font-size="11" text-anchor="start" font-weight="normal">4489 MB</text>
<rect x="569.5" y="255.5" width="12" height="12" fill="#fff" stroke="#1a8080"/>
<path d="M572 261 L574 260.5 L575.5 262.5 L578.5 258 L580 259.5 L575.5 265 Z" fill="#008000" shape-rendering="auto"/>
<text x="584.5" y="266" fill="#000" font-size="11" text-anchor="start" font-weight="normal">Show C1/PIE</text>
<rect x="569.5" y="272.5" width="12" height="12" fill="#fff" stroke="#1a8080"/>
<path d="M572 278 L574 277.5 L575.5 279.5 L578.5 275 L580 276.5 L575.5 282 Z" fill="#008000" shape-rendering="auto"/>
<text x="584.5" y="283" fill="#000" font-size="11" text-anchor="start" font-weight="normal">Show C2/PIF</text>
<rect x="569.5" y="288.5" width="12" height="12" fill="#fff" stroke="#1a8080"/>
<path d="M572 294 L574 293.5 L575.5 295.5 L578.5 291 L580 292.5 L575.5 298 Z" fill="#008000" shape-rendering="auto"/>
<text x="584.5" y="299" fill="#000" font-size="11" text-anchor="start" font-weight="normal">Show Jitter</text>
<rect x="569.5" y="305.5" width="12" height="12" fill="#fff" stroke="#1a8080"/>
<path d="M572 311 L574 310.5 L575.5 312.5 L578.5 308 L580 309.5 L575.5 315 Z" fill="#008000" shape-rendering="auto"/>
<text x="584.5" y="316" fill="#000" font-size="11" text-anchor="start" font-weight="normal">Show Read Speed</text>
<rect x="569.5" y="321.5" width="12" height="12" fill="#fff" stroke="#c0c0c0"/>
<path d="M572 327 L574 326.5 L575.5 328.5 L578.5 324 L580 325.5 L575.5 331 Z" fill="#c8c8c8" shape-rendering="auto"/>
<text x="584.5" y="332" fill="#a0a0a0" font-size="11" text-anchor="start" font-weight="normal">Show Write Speed</text>
<rect x="563" y="345" width="158" height="1" fill="#c0c0c0"/>
<rect x="563" y="367" width="158" height="1" fill="#c0c0c0"/>
<rect x="561" y="347" width="1" height="19" fill="#c0c0c0"/>
<rect x="722" y="347" width="1" height="19" fill="#c0c0c0"/>
<rect x="562" y="346" width="1" height="1" fill="#c0c0c0"/>
<rect x="721" y="346" width="1" height="1" fill="#c0c0c0"/>
<rect x="562" y="366" width="1" height="1" fill="#c0c0c0"/>
<rect x="721" y="366" width="1" height="1" fill="#c0c0c0"/>
<path fill="#000" d="M570 352h7v1h-7zM579 352h9v1h-9zM570 353h1v1h-1zM576 353h1v1h-1zM579 353h19v1h-19zM601 353h8v1h-8zM610 353h10v1h-10zM570 354h1v1h-1zM576 354h1v1h-1zM579 354h1v1h-1zM582 354h1v1h-1zM584 354h1v1h-1zM587 354h1v1h-1zM597 354h1v1h-1zM608 354h1v1h-1zM619 354h1v1h-1zM570 355h7v1h-7zM579 355h1v1h-1zM582 355h1v1h-1zM587 355h1v1h-1zM596 355h1v1h-1zM608 355h1v1h-1zM614 355h1v1h-1zM618 355h1v1h-1zM580 356h8v1h-8zM595 356h1v1h-1zM608 356h1v1h-1zM614 356h1v1h-1zM617 356h2v1h-2zM621 356h1v1h-1zM568 357h4v1h-4zM574 357h4v1h-4zM580 357h8v1h-8zM595 357h1v1h-1zM608 357h1v1h-1zM614 357h1v1h-1zM616 357h1v1h-1zM568 358h1v1h-1zM571 358h1v1h-1zM574 358h1v1h-1zM577 358h1v1h-1zM580 358h8v1h-8zM594 358h2v1h-2zM608 358h1v1h-1zM614 358h1v1h-1zM568 359h1v1h-1zM571 359h1v1h-1zM574 359h1v1h-1zM577 359h1v1h-1zM580 359h1v1h-1zM587 359h1v1h-1zM593 359h1v1h-1zM596 359h2v1h-2zM608 359h1v1h-1zM614 359h1v1h-1zM568 360h1v1h-1zM571 360h1v1h-1zM574 360h1v1h-1zM577 360h1v1h-1zM580 360h8v1h-8zM591 360h2v1h-2zM597 360h2v1h-2zM608 360h1v1h-1zM613 360h1v1h-1zM621 360h1v1h-1zM568 361h4v1h-4zM574 361h4v1h-4zM581 361h2v1h-2zM585 361h2v1h-2zM590 361h1v1h-1zM598 361h1v1h-1zM601 361h8v1h-8zM612 361h1v1h-1zM568 362h1v1h-1zM571 362h1v1h-1zM574 362h1v1h-1zM577 362h1v1h-1zM579 362h2v1h-2zM587 362h2v1h-2z"/>
<text x="705" y="361" fill="#000070" font-size="11" text-anchor="end" font-weight="normal">0</text>
<rect x="563" y="375" width="158" height="1" fill="#c0c0c0"/>
<rect x="563" y="436" width="158" height="1" fill="#c0c0c0"/>
<rect x="561" y="377" width="1" height="58" fill="#c0c0c0"/>
<rect x="722" y="377" width="1" height="58" fill="#c0c0c0"/>
<rect x="562" y="376" width="1" height="1" fill="#c0c0c0"/>
<rect x="721" y="376" width="1" height="1" fill="#c0c0c0"/>
<rect x="562" y="435" width="1" height="1" fill="#c0c0c0"/>
<rect x="721" y="435" width="1" height="1" fill="#c0c0c0"/>
<path fill="#000" d="M569 383h1v1h-1zM573 383h1v1h-1zM576 383h1v1h-1zM583 383h1v1h-1zM585 383h6v1h-6zM595 383h1v1h-1zM599 383h1v1h-1zM601 383h1v1h-1zM606 383h1v1h-1zM609 383h7v1h-7zM569 384h2v1h-2zM573 384h1v1h-1zM576 384h1v1h-1zM582 384h1v1h-1zM595 384h1v1h-1zM599 384h1v1h-1zM602 384h1v1h-1zM607 384h1v1h-1zM609 384h1v1h-1zM615 384h1v1h-1zM570 385h1v1h-1zM572 385h7v1h-7zM581 385h1v1h-1zM593 385h1v1h-1zM595 385h1v1h-1zM599 385h1v1h-1zM602 385h1v1h-1zM609 385h1v1h-1zM615 385h1v1h-1zM571 386h2v1h-2zM575 386h1v1h-1zM583 386h1v1h-1zM593 386h1v1h-1zM595 386h9v1h-9zM605 386h2v1h-2zM609 386h1v1h-1zM615 386h1v1h-1zM572 387h7v1h-7zM582 387h1v1h-1zM584 387h8v1h-8zM595 387h1v1h-1zM599 387h1v1h-1zM606 387h2v1h-2zM609 387h7v1h-7zM618 387h1v1h-1zM568 388h3v1h-3zM572 388h1v1h-1zM575 388h1v1h-1zM581 388h2v1h-2zM589 388h1v1h-1zM595 388h1v1h-1zM599 388h2v1h-2zM611 388h1v1h-1zM613 388h1v1h-1zM570 389h1v1h-1zM572 389h7v1h-7zM580 389h1v1h-1zM582 389h1v1h-1zM589 389h1v1h-1zM594 389h2v1h-2zM599 389h2v1h-2zM611 389h1v1h-1zM613 389h1v1h-1zM570 390h1v1h-1zM572 390h1v1h-1zM575 390h1v1h-1zM582 390h1v1h-1zM589 390h1v1h-1zM592 390h2v1h-2zM595 390h1v1h-1zM598 390h1v1h-1zM601 390h1v1h-1zM607 390h1v1h-1zM610 390h1v1h-1zM613 390h1v1h-1zM570 391h1v1h-1zM572 391h7v1h-7zM582 391h1v1h-1zM589 391h1v1h-1zM595 391h1v1h-1zM598 391h1v1h-1zM601 391h1v1h-1zM607 391h1v1h-1zM610 391h1v1h-1zM613 391h1v1h-1zM616 391h1v1h-1zM618 391h1v1h-1zM569 392h3v1h-3zM582 392h1v1h-1zM589 392h1v1h-1zM595 392h1v1h-1zM597 392h1v1h-1zM602 392h1v1h-1zM606 392h1v1h-1zM609 392h2v1h-2zM613 392h1v1h-1zM616 392h1v1h-1zM568 393h2v1h-2zM572 393h8v1h-8zM582 393h1v1h-1zM586 393h3v1h-3zM595 393h2v1h-2zM606 393h1v1h-1zM608 393h1v1h-1zM613 393h3v1h-3z"/>
<text x="707" y="392" fill="#000070" font-size="11" text-anchor="end" font-weight="normal">100 %</text>
<path fill="#000" d="M577 400h1v1h-1zM572 401h1v1h-1zM576 401h1v1h-1zM578 401h1v1h-1zM586 401h1v1h-1zM572 402h1v1h-1zM576 402h2v1h-2zM579 402h3v1h-3zM585 402h2v1h-2zM589 402h2v1h-2zM606 402h2v1h-2zM568 403h10v1h-10zM591 403h1v1h-1zM596 403h1v1h-1zM598 403h7v1h-7zM608 403h2v1h-2zM614 403h1v1h-1zM572 404h1v1h-1zM586 404h1v1h-1zM596 404h1v1h-1zM604 404h1v1h-1zM614 404h1v1h-1zM569 405h1v1h-1zM572 405h1v1h-1zM575 405h1v1h-1zM578 405h3v1h-3zM586 405h1v1h-1zM588 405h3v1h-3zM596 405h1v1h-1zM604 405h1v1h-1zM614 405h1v1h-1zM616 405h1v1h-1zM569 406h1v1h-1zM572 406h1v1h-1zM575 406h1v1h-1zM585 406h1v1h-1zM595 406h1v1h-1zM599 406h6v1h-6zM613 406h1v1h-1zM569 407h1v1h-1zM572 407h1v1h-1zM576 407h1v1h-1zM585 407h1v1h-1zM594 407h2v1h-2zM604 407h1v1h-1zM613 407h1v1h-1zM569 408h1v1h-1zM572 408h1v1h-1zM576 408h1v1h-1zM584 408h1v1h-1zM593 408h2v1h-2zM604 408h1v1h-1zM611 408h2v1h-2zM568 409h1v1h-1zM572 409h1v1h-1zM577 409h1v1h-1zM582 409h2v1h-2zM591 409h3v1h-3zM604 409h1v1h-1zM609 409h3v1h-3zM616 409h1v1h-1zM568 410h1v1h-1zM572 410h1v1h-1zM577 410h5v1h-5zM588 410h4v1h-4zM598 410h7v1h-7zM606 410h3v1h-3zM572 411h1v1h-1z"/>
<text x="706" y="411" fill="#000070" font-size="11" text-anchor="end" font-weight="normal">3585 MB</text>
<path fill="#000" d="M569 418h1v1h-1zM575 418h1v1h-1zM587 418h1v1h-1zM569 419h2v1h-2zM572 419h7v1h-7zM582 419h11v1h-11zM570 420h1v1h-1zM575 420h1v1h-1zM582 420h1v1h-1zM585 420h1v1h-1zM589 420h1v1h-1zM572 421h7v1h-7zM582 421h10v1h-10zM572 422h1v1h-1zM575 422h1v1h-1zM578 422h1v1h-1zM582 422h1v1h-1zM585 422h5v1h-5zM595 422h1v1h-1zM568 423h3v1h-3zM572 423h7v1h-7zM582 423h1v1h-1zM570 424h1v1h-1zM574 424h2v1h-2zM582 424h1v1h-1zM584 424h7v1h-7zM570 425h1v1h-1zM573 425h5v1h-5zM582 425h1v1h-1zM585 425h1v1h-1zM589 425h2v1h-2zM570 426h1v1h-1zM572 426h1v1h-1zM575 426h1v1h-1zM578 426h1v1h-1zM582 426h1v1h-1zM586 426h1v1h-1zM588 426h1v1h-1zM595 426h1v1h-1zM569 427h3v1h-3zM575 427h1v1h-1zM582 427h1v1h-1zM586 427h4v1h-4zM568 428h2v1h-2zM572 428h8v1h-8zM581 428h1v1h-1zM583 428h3v1h-3zM590 428h2v1h-2z"/>
<text x="708" y="429" fill="#000070" font-size="11" text-anchor="end" font-weight="normal">7.70 X</text>
</svg></body></html>
